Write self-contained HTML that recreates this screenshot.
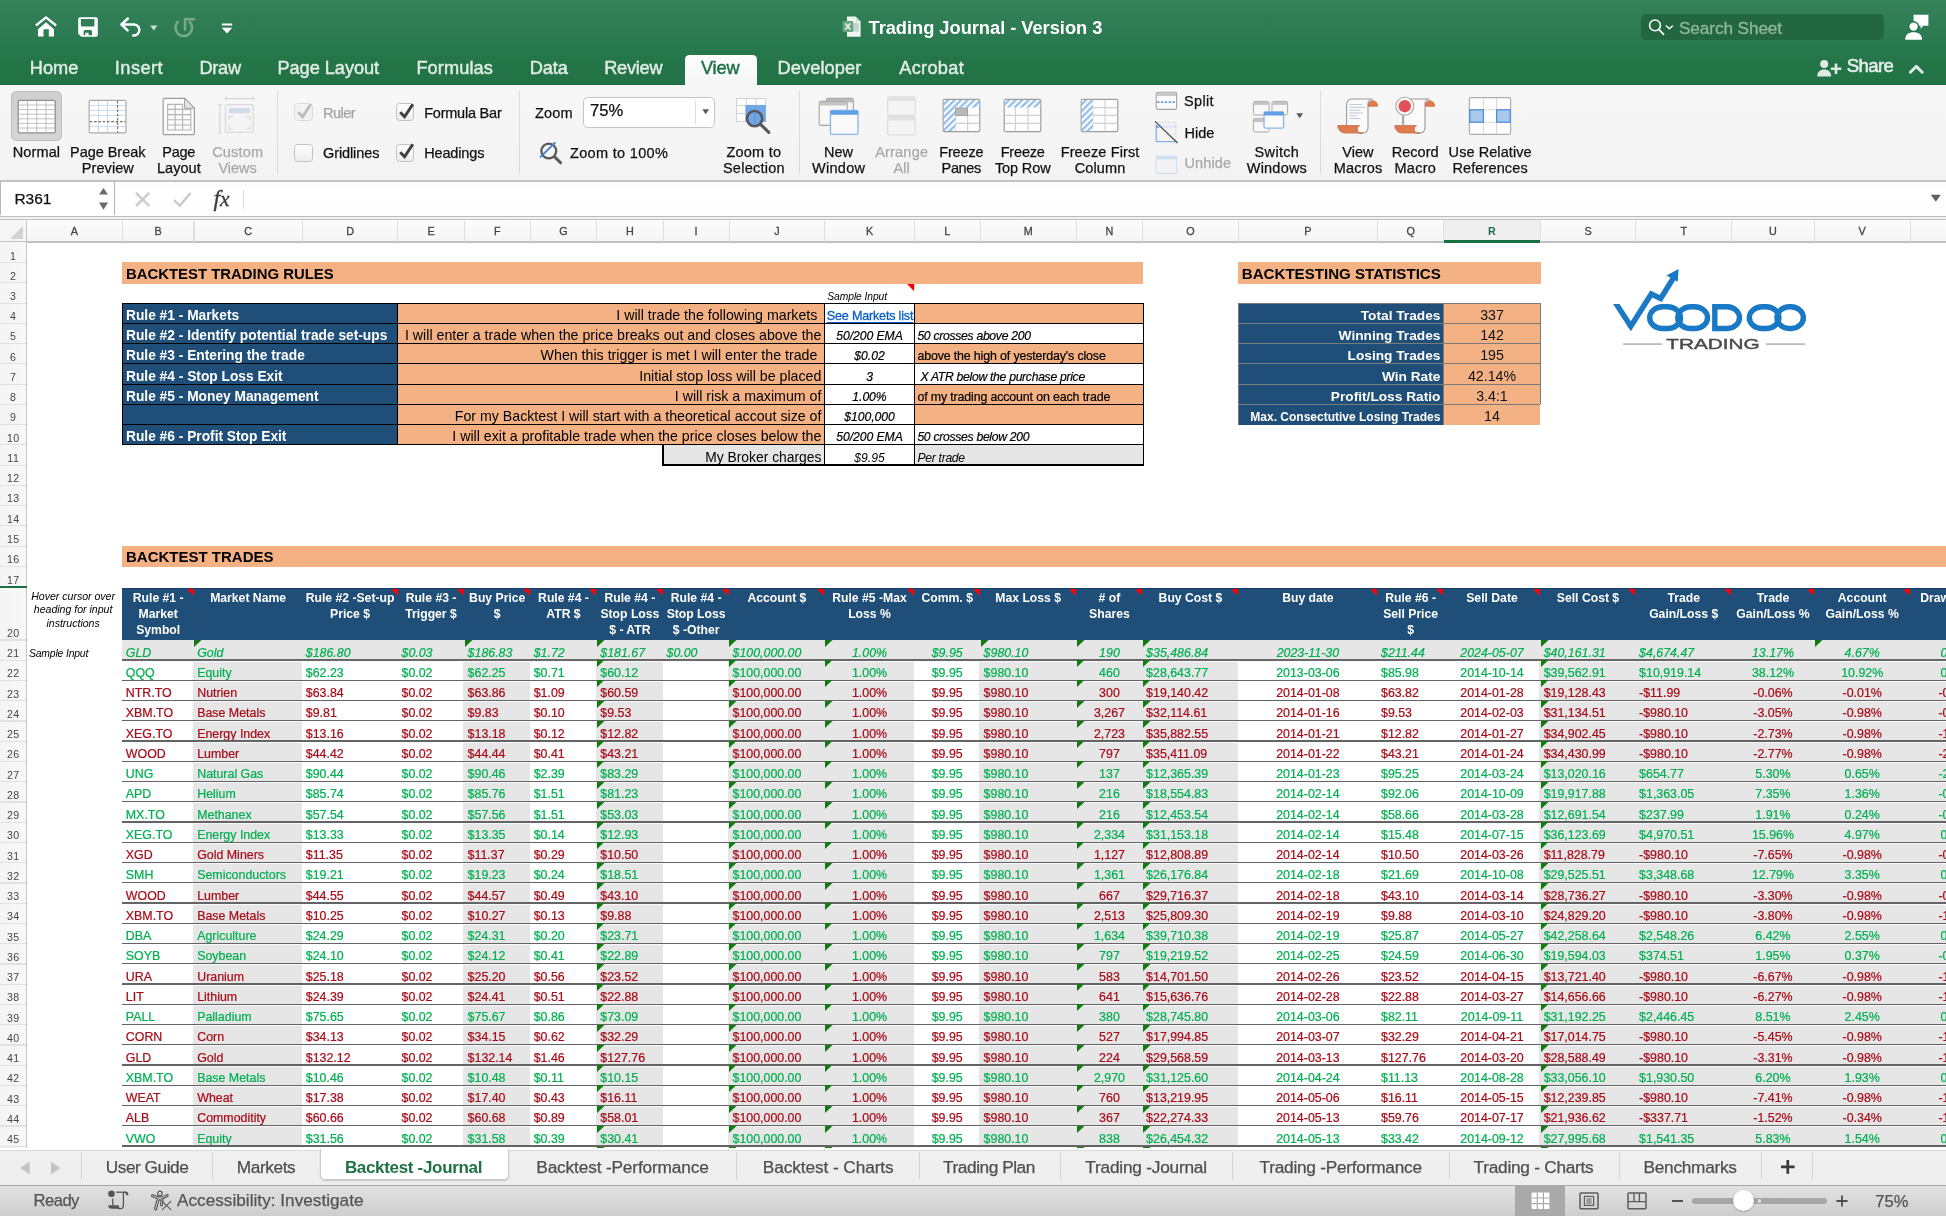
<!DOCTYPE html>
<html>
<head>
<meta charset="utf-8">
<title>Trading Journal - Version 3</title>
<style>
html,body{margin:0;padding:0;}
body{width:1946px;height:1216px;overflow:hidden;position:relative;will-change:transform;background:#fff;font-family:"Liberation Sans",sans-serif;color:#000;}
div,span,svg{position:absolute;box-sizing:border-box;}
.t{white-space:nowrap;line-height:1;}
.c{white-space:nowrap;line-height:1;-webkit-text-stroke:0.22px currentColor;}
.g{color:#00b050;}
.r{color:#a80c18;}
.i{font-style:italic;}
.hd{color:#fff;font-weight:bold;font-size:12.2px;line-height:16.2px;text-align:center;}
.rn{color:#454545;text-align:center;line-height:1;letter-spacing:0.5px;white-space:nowrap;}
.cl{color:#454545;text-align:center;line-height:1;white-space:nowrap;}
.rb{font-size:15.3px;color:#000;text-align:center;line-height:16px;white-space:nowrap;}
.rbd{color:#a6a6a6;}
.tab{font-size:18.3px;color:#e6efe9;top:58px;line-height:20px;white-space:nowrap;}
.st{font-size:17.2px;color:#4d4d4d;top:1157px;line-height:20px;white-space:nowrap;}
</style>
</head>
<body>
<!-- sheet -->
<div id="sheet" style="left:0;top:216px;width:1946px;height:932px;overflow:hidden;background:#fff;">
<div style="left:122.0px;top:46.4px;width:1021.3px;height:21.2px;background:#f4b183;"></div>
<div class="t" style="left:126.0px;top:51.0px;width:300.0px;height:17.9px;font-size:14.90px;font-weight:bold;">BACKTEST TRADING RULES</div>
<div style="left:1237.8px;top:46.4px;width:302.9px;height:21.2px;background:#f4b183;"></div>
<div class="t" style="left:1241.8px;top:50.0px;width:300.0px;height:18.1px;font-size:15.10px;font-weight:bold;">BACKTESTING STATISTICS</div>
<div style="left:122.0px;top:329.9px;width:1825.6px;height:21.2px;background:#f4b183;"></div>
<div class="t" style="left:126.0px;top:333.0px;width:300.0px;height:18.0px;font-size:15.00px;font-weight:bold;">BACKTEST TRADES</div>
<div class="t" style="left:827.3px;top:76.0px;width:80.0px;height:13.3px;font-size:10.30px;font-style:italic;letter-spacing:-0.08px;">Sample Input</div>
<svg style="left:906.6px;top:67.8px" width="8" height="8"><path d="M0 0H7.200V7.200Z" fill="#ff0000"/></svg>
<div style="left:122.4px;top:87.1px;width:275.5px;height:20.2px;background:#1f4e79;"></div>
<div style="left:397.9px;top:87.1px;width:426.9px;height:20.2px;background:#f4b183;"></div>
<div style="left:824.8px;top:87.1px;width:89.4px;height:20.2px;background:#fff;"></div>
<div style="left:914.2px;top:87.1px;width:229.1px;height:20.2px;background:#f4b183;"></div>
<div class="t" style="left:126.0px;top:93.0px;width:280.0px;height:16.8px;font-size:13.75px;color:#fff;font-weight:bold;">Rule #1 - Markets</div>
<div class="t" style="left:397.9px;top:92.0px;width:419.5px;height:17.2px;font-size:14.20px;text-align:right;">I will trade the following markets</div>
<div class="t" style="left:826.8px;top:94.0px;width:89.4px;height:15.6px;font-size:12.60px;color:#0a5fc8;text-decoration:underline;text-decoration-thickness:1.500px;text-underline-offset:1.500px;letter-spacing:-0.2px;-webkit-text-stroke:0.300px #0a5fc8;">See Markets list</div>
<div style="left:122.4px;top:107.4px;width:275.5px;height:20.2px;background:#1f4e79;"></div>
<div style="left:397.9px;top:107.4px;width:426.9px;height:20.2px;background:#f4b183;"></div>
<div style="left:824.8px;top:107.4px;width:89.4px;height:20.2px;background:#fff;"></div>
<div style="left:914.2px;top:107.4px;width:229.1px;height:20.2px;background:#fff;"></div>
<div class="t" style="left:126.0px;top:113.0px;width:280.0px;height:16.8px;font-size:13.75px;color:#fff;font-weight:bold;">Rule #2 - Identify potential trade set-ups</div>
<div class="t" style="left:397.9px;top:112.0px;width:423.5px;height:17.2px;font-size:14.20px;text-align:right;">I will enter a trade when the price breaks out and closes above the</div>
<div class="t" style="left:824.8px;top:114.0px;width:89.4px;height:15.2px;font-size:12.20px;text-align:center;font-style:italic;letter-spacing:-0.05px;-webkit-text-stroke:0.200px #000;">50/200 EMA</div>
<div class="t" style="left:917.4px;top:114.0px;width:240.0px;height:15.2px;font-size:12.20px;font-style:italic;letter-spacing:-0.3px;-webkit-text-stroke:0.200px #000;">50 crosses above 200</div>
<div style="left:122.4px;top:127.6px;width:275.5px;height:20.2px;background:#1f4e79;"></div>
<div style="left:397.9px;top:127.6px;width:426.9px;height:20.2px;background:#f4b183;"></div>
<div style="left:824.8px;top:127.6px;width:89.4px;height:20.2px;background:#fff;"></div>
<div style="left:914.2px;top:127.6px;width:229.1px;height:20.2px;background:#f4b183;"></div>
<div class="t" style="left:126.0px;top:133.0px;width:280.0px;height:16.8px;font-size:13.75px;color:#fff;font-weight:bold;">Rule #3 - Entering the trade</div>
<div class="t" style="left:397.9px;top:132.0px;width:419.5px;height:17.2px;font-size:14.20px;text-align:right;">When this trigger is met I will enter the trade</div>
<div class="t" style="left:824.8px;top:134.0px;width:89.4px;height:15.2px;font-size:12.20px;text-align:center;font-style:italic;letter-spacing:-0.05px;-webkit-text-stroke:0.200px #000;">$0.02</div>
<div class="t" style="left:917.4px;top:134.0px;width:240.0px;height:15.4px;font-size:12.40px;letter-spacing:-0.14px;-webkit-text-stroke:0.200px #000;">above the high of yesterday&#x27;s close</div>
<div style="left:122.4px;top:147.9px;width:275.5px;height:20.2px;background:#1f4e79;"></div>
<div style="left:397.9px;top:147.9px;width:426.9px;height:20.2px;background:#f4b183;"></div>
<div style="left:824.8px;top:147.9px;width:89.4px;height:20.2px;background:#fff;"></div>
<div style="left:914.2px;top:147.9px;width:229.1px;height:20.2px;background:#fff;"></div>
<div class="t" style="left:126.0px;top:154.0px;width:280.0px;height:16.8px;font-size:13.75px;color:#fff;font-weight:bold;">Rule #4 - Stop Loss Exit</div>
<div class="t" style="left:397.9px;top:153.0px;width:423.5px;height:17.2px;font-size:14.20px;text-align:right;">Initial stop loss will be placed</div>
<div class="t" style="left:824.8px;top:155.0px;width:89.4px;height:15.2px;font-size:12.20px;text-align:center;font-style:italic;letter-spacing:-0.05px;-webkit-text-stroke:0.200px #000;">3</div>
<div class="t" style="left:917.4px;top:155.0px;width:240.0px;height:15.2px;font-size:12.20px;font-style:italic;letter-spacing:-0.3px;-webkit-text-stroke:0.200px #000;">&nbsp;X ATR below the purchase price</div>
<div style="left:122.4px;top:168.1px;width:275.5px;height:20.2px;background:#1f4e79;"></div>
<div style="left:397.9px;top:168.1px;width:426.9px;height:20.2px;background:#f4b183;"></div>
<div style="left:824.8px;top:168.1px;width:89.4px;height:20.2px;background:#fff;"></div>
<div style="left:914.2px;top:168.1px;width:229.1px;height:20.2px;background:#f4b183;"></div>
<div class="t" style="left:126.0px;top:174.0px;width:280.0px;height:16.8px;font-size:13.75px;color:#fff;font-weight:bold;">Rule #5 - Money Management</div>
<div class="t" style="left:397.9px;top:173.0px;width:423.5px;height:17.2px;font-size:14.20px;text-align:right;">I will risk a maximum of</div>
<div class="t" style="left:824.8px;top:175.0px;width:89.4px;height:15.2px;font-size:12.20px;text-align:center;font-style:italic;letter-spacing:-0.05px;-webkit-text-stroke:0.200px #000;">1.00%</div>
<div class="t" style="left:917.4px;top:175.0px;width:240.0px;height:15.4px;font-size:12.40px;letter-spacing:-0.14px;-webkit-text-stroke:0.200px #000;">of my trading account on each trade</div>
<div style="left:122.4px;top:188.4px;width:275.5px;height:20.2px;background:#1f4e79;"></div>
<div style="left:397.9px;top:188.4px;width:426.9px;height:20.2px;background:#f4b183;"></div>
<div style="left:824.8px;top:188.4px;width:89.4px;height:20.2px;background:#fff;"></div>
<div style="left:914.2px;top:188.4px;width:229.1px;height:20.2px;background:#f4b183;"></div>
<div class="t" style="left:397.9px;top:193.0px;width:423.5px;height:17.2px;font-size:14.20px;text-align:right;">For my Backtest I will start with a theoretical accout size of</div>
<div class="t" style="left:824.8px;top:195.0px;width:89.4px;height:15.2px;font-size:12.20px;text-align:center;font-style:italic;letter-spacing:-0.05px;-webkit-text-stroke:0.200px #000;">$100,000</div>
<div style="left:122.4px;top:208.6px;width:275.5px;height:20.2px;background:#1f4e79;"></div>
<div style="left:397.9px;top:208.6px;width:426.9px;height:20.2px;background:#f4b183;"></div>
<div style="left:824.8px;top:208.6px;width:89.4px;height:20.2px;background:#fff;"></div>
<div style="left:914.2px;top:208.6px;width:229.1px;height:20.2px;background:#fff;"></div>
<div class="t" style="left:126.0px;top:214.0px;width:280.0px;height:16.8px;font-size:13.75px;color:#fff;font-weight:bold;">Rule #6 - Profit Stop Exit</div>
<div class="t" style="left:397.9px;top:213.0px;width:423.5px;height:17.2px;font-size:14.20px;text-align:right;">I will exit a profitable trade when the price closes below the</div>
<div class="t" style="left:824.8px;top:215.0px;width:89.4px;height:15.2px;font-size:12.20px;text-align:center;font-style:italic;letter-spacing:-0.05px;-webkit-text-stroke:0.200px #000;">50/200 EMA</div>
<div class="t" style="left:917.4px;top:215.0px;width:240.0px;height:15.2px;font-size:12.20px;font-style:italic;letter-spacing:-0.3px;-webkit-text-stroke:0.200px #000;">50 crosses below 200</div>
<div style="left:663.1px;top:228.9px;width:161.7px;height:20.2px;background:#e6e6e6;"></div>
<div style="left:824.8px;top:228.9px;width:89.4px;height:20.2px;background:#fff;"></div>
<div style="left:914.2px;top:228.9px;width:229.1px;height:20.2px;background:#e6e6e6;"></div>
<div class="t" style="left:663.1px;top:235.0px;width:158.3px;height:16.9px;font-size:13.85px;text-align:right;">My Broker charges</div>
<div class="t" style="left:824.8px;top:236.0px;width:89.4px;height:15.2px;font-size:12.20px;text-align:center;font-style:italic;letter-spacing:-0.05px;">$9.95</div>
<div class="t" style="left:917.4px;top:236.0px;width:200.0px;height:15.2px;font-size:12.20px;font-style:italic;letter-spacing:-0.3px;">Per trade</div>
<div style="left:121.6px;top:86.5px;width:1022.5px;height:1.3px;background:#000;"></div>
<div style="left:121.6px;top:106.8px;width:1022.5px;height:1.3px;background:#000;"></div>
<div style="left:121.6px;top:127.0px;width:1022.5px;height:1.3px;background:#000;"></div>
<div style="left:121.6px;top:147.2px;width:1022.5px;height:1.3px;background:#000;"></div>
<div style="left:121.6px;top:167.5px;width:1022.5px;height:1.3px;background:#000;"></div>
<div style="left:121.6px;top:187.8px;width:1022.5px;height:1.3px;background:#000;"></div>
<div style="left:121.6px;top:208.0px;width:1022.5px;height:1.3px;background:#000;"></div>
<div style="left:121.6px;top:228.2px;width:1022.5px;height:1.3px;background:#000;"></div>
<div style="left:662.3px;top:248.4px;width:481.8px;height:1.4px;background:#000;"></div>
<div style="left:121.8px;top:87.1px;width:1.3px;height:141.8px;background:#000;"></div>
<div style="left:397.2px;top:87.1px;width:1.3px;height:141.8px;background:#000;"></div>
<div style="left:824.1px;top:87.1px;width:1.3px;height:162.0px;background:#000;"></div>
<div style="left:913.6px;top:87.1px;width:1.3px;height:162.0px;background:#000;"></div>
<div style="left:1142.6px;top:87.1px;width:1.4px;height:162.0px;background:#000;"></div>
<div style="left:662.4px;top:228.9px;width:1.4px;height:20.2px;background:#000;"></div>
<div style="left:1238.2px;top:87.1px;width:205.5px;height:20.2px;background:#1f4e79;"></div>
<div style="left:1443.7px;top:87.1px;width:96.6px;height:20.2px;background:#f4b183;"></div>
<div class="t" style="left:1238.2px;top:93.0px;width:202.2px;height:16.7px;font-size:13.70px;text-align:right;color:#fff;font-weight:bold;">Total Trades</div>
<div class="t" style="left:1443.7px;top:92.0px;width:96.6px;height:17.2px;font-size:14.20px;text-align:center;color:#111;">337</div>
<div style="left:1238.2px;top:107.4px;width:205.5px;height:20.2px;background:#1f4e79;"></div>
<div style="left:1443.7px;top:107.4px;width:96.6px;height:20.2px;background:#f4b183;"></div>
<div class="t" style="left:1238.2px;top:113.0px;width:202.2px;height:16.7px;font-size:13.70px;text-align:right;color:#fff;font-weight:bold;">Winning Trades</div>
<div class="t" style="left:1443.7px;top:112.0px;width:96.6px;height:17.2px;font-size:14.20px;text-align:center;color:#111;">142</div>
<div style="left:1238.2px;top:127.6px;width:205.5px;height:20.2px;background:#1f4e79;"></div>
<div style="left:1443.7px;top:127.6px;width:96.6px;height:20.2px;background:#f4b183;"></div>
<div class="t" style="left:1238.2px;top:133.0px;width:202.2px;height:16.7px;font-size:13.70px;text-align:right;color:#fff;font-weight:bold;">Losing Trades</div>
<div class="t" style="left:1443.7px;top:132.0px;width:96.6px;height:17.2px;font-size:14.20px;text-align:center;color:#111;">195</div>
<div style="left:1238.2px;top:147.9px;width:205.5px;height:20.2px;background:#1f4e79;"></div>
<div style="left:1443.7px;top:147.9px;width:96.6px;height:20.2px;background:#f4b183;"></div>
<div class="t" style="left:1238.2px;top:154.0px;width:202.2px;height:16.7px;font-size:13.70px;text-align:right;color:#fff;font-weight:bold;">Win Rate</div>
<div class="t" style="left:1443.7px;top:153.0px;width:96.6px;height:17.2px;font-size:14.20px;text-align:center;color:#111;">42.14%</div>
<div style="left:1238.2px;top:168.1px;width:205.5px;height:20.2px;background:#1f4e79;"></div>
<div style="left:1443.7px;top:168.1px;width:96.6px;height:20.2px;background:#f4b183;"></div>
<div class="t" style="left:1238.2px;top:174.0px;width:202.2px;height:16.7px;font-size:13.70px;text-align:right;color:#fff;font-weight:bold;">Profit/Loss Ratio</div>
<div class="t" style="left:1443.7px;top:173.0px;width:96.6px;height:17.2px;font-size:14.20px;text-align:center;color:#111;">3.4:1</div>
<div style="left:1238.2px;top:188.4px;width:205.5px;height:20.2px;background:#1f4e79;"></div>
<div style="left:1443.7px;top:188.4px;width:96.6px;height:20.2px;background:#f4b183;"></div>
<div class="t" style="left:1238.2px;top:195.0px;width:202.2px;height:15.0px;font-size:12.00px;text-align:right;color:#fff;font-weight:bold;">Max. Consectutive Losing Trades</div>
<div class="t" style="left:1443.7px;top:193.0px;width:96.6px;height:17.2px;font-size:14.20px;text-align:center;color:#111;">14</div>
<div style="left:1238.2px;top:86.5px;width:302.1px;height:1.2px;background:#7a7a7a;"></div>
<div style="left:1238.2px;top:106.8px;width:302.1px;height:1.2px;background:#7a7a7a;"></div>
<div style="left:1238.2px;top:127.0px;width:302.1px;height:1.2px;background:#7a7a7a;"></div>
<div style="left:1238.2px;top:147.3px;width:302.1px;height:1.2px;background:#7a7a7a;"></div>
<div style="left:1238.2px;top:167.5px;width:302.1px;height:1.2px;background:#7a7a7a;"></div>
<div style="left:1238.2px;top:187.8px;width:302.1px;height:1.2px;background:#7a7a7a;"></div>
<div style="left:1237.6px;top:87.1px;width:1.2px;height:121.5px;background:#7a7a7a;"></div>
<div style="left:1443.1px;top:87.1px;width:1.2px;height:121.5px;background:#7a7a7a;"></div>
<div style="left:1539.7px;top:87.1px;width:1.2px;height:101.2px;background:#7a7a7a;"></div>
<svg style="left:1590px;top:39.0px" width="240" height="110" viewBox="0 0 1946 892">
<defs><clipPath id="vclip"><rect x="0" y="398" width="700" height="300"/></clipPath></defs>
<g fill="none" stroke="#1a79c4" stroke-width="44">
<path d="M190 362 L331 578" clip-path="url(#vclip)"/>
<path d="M319 560 L331 578 L497 316 L573 352 L680 180" stroke-linejoin="miter" stroke-miterlimit="6"/>
<rect x="484" y="420" width="250" height="176" rx="104" ry="88"/>
<rect x="712" y="420" width="241" height="176" rx="104" ry="88"/>
<path d="M1012 420 H1112 A100 88 0 0 1 1112 596 H1012 Z"/>
<rect x="1292" y="420" width="240" height="176" rx="104" ry="88"/>
<rect x="1516" y="420" width="214" height="176" rx="100" ry="88"/>
</g>
<path d="M718 113 L620 166 L712 217 Z" fill="#1a79c4"/>
<rect x="268" y="719" width="316" height="6" fill="#5c5c5c"/>
<rect x="1425" y="719" width="320" height="6" fill="#5c5c5c"/>
<text x="618" y="760" font-family="Liberation Sans, sans-serif" font-size="124" fill="#4a4a4c" stroke="#4a4a4c" stroke-width="3.5" textLength="758" lengthAdjust="spacingAndGlyphs">TRADING</text>
</svg>
<div style="left:25.0px;top:373.6px;width:96.2px;height:44.0px;font-size:10.6px;font-style:italic;text-align:center;line-height:13.6px;letter-spacing:-0.02px;">Hover cursor over<br>heading for input<br>instructions</div>
<div class="t" style="left:29.0px;top:433.0px;width:90.0px;height:13.4px;font-size:10.40px;font-style:italic;letter-spacing:-0.17px;">Sample Input</div>
<div style="left:122.0px;top:372.0px;width:1825.6px;height:52.2px;background:#1f4e79;"></div>
<div class="hd" style="left:112.4px;top:373.6px;width:91.6px;height:50.0px;">Rule #1 -<br>Market<br>Symbol</div>
<svg style="left:186.6px;top:372.8px" width="7" height="7"><path d="M0 0H6.800V6.800Z" fill="#ff0000"/></svg>
<div class="hd" style="left:184.0px;top:373.6px;width:128.2px;height:50.0px;">Market Name</div>
<div class="hd" style="left:292.2px;top:373.6px;width:115.7px;height:50.0px;">Rule #2 -Set-up<br>Price $</div>
<svg style="left:390.5px;top:372.8px" width="7" height="7"><path d="M0 0H6.800V6.800Z" fill="#ff0000"/></svg>
<div class="hd" style="left:387.9px;top:373.6px;width:86.3px;height:50.0px;">Rule #3 -<br>Trigger $</div>
<svg style="left:456.8px;top:372.8px" width="7" height="7"><path d="M0 0H6.800V6.800Z" fill="#ff0000"/></svg>
<div class="hd" style="left:454.2px;top:373.6px;width:86.1px;height:50.0px;">Buy Price<br>$</div>
<svg style="left:522.9px;top:372.8px" width="7" height="7"><path d="M0 0H6.800V6.800Z" fill="#ff0000"/></svg>
<div class="hd" style="left:520.3px;top:373.6px;width:86.4px;height:50.0px;">Rule #4 -<br>ATR $</div>
<svg style="left:589.3px;top:372.8px" width="7" height="7"><path d="M0 0H6.800V6.800Z" fill="#ff0000"/></svg>
<div class="hd" style="left:586.7px;top:373.6px;width:86.4px;height:50.0px;">Rule #4 -<br>Stop Loss<br>$ - ATR</div>
<svg style="left:655.7px;top:372.8px" width="7" height="7"><path d="M0 0H6.800V6.800Z" fill="#ff0000"/></svg>
<div class="hd" style="left:653.1px;top:373.6px;width:86.0px;height:50.0px;">Rule #4 -<br>Stop Loss<br>$ -Other</div>
<svg style="left:721.7px;top:372.8px" width="7" height="7"><path d="M0 0H6.800V6.800Z" fill="#ff0000"/></svg>
<div class="hd" style="left:719.1px;top:373.6px;width:115.7px;height:50.0px;">Account $</div>
<svg style="left:817.4px;top:372.8px" width="7" height="7"><path d="M0 0H6.800V6.800Z" fill="#ff0000"/></svg>
<div class="hd" style="left:814.8px;top:373.6px;width:109.4px;height:50.0px;">Rule #5 -Max<br>Loss %</div>
<svg style="left:906.8px;top:372.8px" width="7" height="7"><path d="M0 0H6.800V6.800Z" fill="#ff0000"/></svg>
<div class="hd" style="left:904.2px;top:373.6px;width:86.0px;height:50.0px;">Comm. $</div>
<svg style="left:972.8px;top:372.8px" width="7" height="7"><path d="M0 0H6.800V6.800Z" fill="#ff0000"/></svg>
<div class="hd" style="left:970.2px;top:373.6px;width:116.0px;height:50.0px;">Max Loss $</div>
<svg style="left:1068.8px;top:372.8px" width="7" height="7"><path d="M0 0H6.800V6.800Z" fill="#ff0000"/></svg>
<div class="hd" style="left:1066.2px;top:373.6px;width:86.5px;height:50.0px;"># of<br>Shares</div>
<svg style="left:1135.3px;top:372.8px" width="7" height="7"><path d="M0 0H6.800V6.800Z" fill="#ff0000"/></svg>
<div class="hd" style="left:1132.7px;top:373.6px;width:115.5px;height:50.0px;">Buy Cost $</div>
<svg style="left:1230.8px;top:372.8px" width="7" height="7"><path d="M0 0H6.800V6.800Z" fill="#ff0000"/></svg>
<div class="hd" style="left:1228.2px;top:373.6px;width:159.4px;height:50.0px;">Buy date</div>
<svg style="left:1370.2px;top:372.8px" width="7" height="7"><path d="M0 0H6.800V6.800Z" fill="#ff0000"/></svg>
<div class="hd" style="left:1367.6px;top:373.6px;width:86.1px;height:50.0px;">Rule #6 -<br>Sell Price<br>$</div>
<svg style="left:1436.3px;top:372.8px" width="7" height="7"><path d="M0 0H6.800V6.800Z" fill="#ff0000"/></svg>
<div class="hd" style="left:1433.7px;top:373.6px;width:116.6px;height:50.0px;">Sell Date</div>
<svg style="left:1532.9px;top:372.8px" width="7" height="7"><path d="M0 0H6.800V6.800Z" fill="#ff0000"/></svg>
<div class="hd" style="left:1530.3px;top:373.6px;width:115.4px;height:50.0px;">Sell Cost $</div>
<svg style="left:1628.3px;top:372.8px" width="7" height="7"><path d="M0 0H6.800V6.800Z" fill="#ff0000"/></svg>
<div class="hd" style="left:1625.7px;top:373.6px;width:116.0px;height:50.0px;">Trade<br>Gain/Loss $</div>
<svg style="left:1724.3px;top:372.8px" width="7" height="7"><path d="M0 0H6.800V6.800Z" fill="#ff0000"/></svg>
<div class="hd" style="left:1721.7px;top:373.6px;width:102.5px;height:50.0px;">Trade<br>Gain/Loss %</div>
<svg style="left:1806.8px;top:372.8px" width="7" height="7"><path d="M0 0H6.800V6.800Z" fill="#ff0000"/></svg>
<div class="hd" style="left:1804.2px;top:373.6px;width:116.0px;height:50.0px;">Account<br>Gain/Loss %</div>
<svg style="left:1902.8px;top:372.8px" width="7" height="7"><path d="M0 0H6.800V6.800Z" fill="#ff0000"/></svg>
<div class="hd" style="left:1900.2px;top:373.6px;width:115.8px;height:50.0px;">Drawdown %</div>
<div style="left:122.0px;top:424.0px;width:1825.6px;height:20.2px;background:#e6e6e6;"></div>
<div style="left:193.1px;top:444.2px;width:109.1px;height:490.0px;background:#e6e6e6;"></div>
<div style="left:463.3px;top:444.2px;width:67.0px;height:490.0px;background:#e6e6e6;"></div>
<div style="left:595.8px;top:444.2px;width:67.3px;height:490.0px;background:#e6e6e6;"></div>
<div style="left:728.2px;top:444.2px;width:186.0px;height:490.0px;background:#e6e6e6;"></div>
<div style="left:979.3px;top:444.2px;width:258.9px;height:490.0px;background:#e6e6e6;"></div>
<div style="left:1539.4px;top:444.2px;width:466.6px;height:490.0px;background:#e6e6e6;"></div>
<div class="c g i" style="left:125.8px;top:431.0px;width:71.6px;height:15.4px;font-size:12.40px;">GLD</div>
<div class="c g i" style="left:197.2px;top:431.0px;width:108.2px;height:15.4px;font-size:12.40px;">Gold</div>
<div class="c g i" style="left:305.8px;top:431.0px;width:95.7px;height:15.4px;font-size:12.40px;">$186.80</div>
<div class="c g i" style="left:401.5px;top:431.0px;width:66.3px;height:15.4px;font-size:12.40px;">$0.03</div>
<div class="c g i" style="left:467.6px;top:431.0px;width:66.1px;height:15.4px;font-size:12.40px;">$186.83</div>
<div class="c g i" style="left:533.7px;top:431.0px;width:66.4px;height:15.4px;font-size:12.40px;">$1.72</div>
<div class="c g i" style="left:600.3px;top:431.0px;width:66.4px;height:15.4px;font-size:12.40px;">$181.67</div>
<div class="c g i" style="left:666.5px;top:431.0px;width:66.0px;height:15.4px;font-size:12.40px;">$0.00</div>
<div class="c g i" style="left:732.5px;top:431.0px;width:95.7px;height:15.4px;font-size:12.40px;">$100,000.00</div>
<div class="c g i" style="left:804.8px;top:431.0px;width:129.4px;height:15.4px;font-size:12.40px;text-align:center;">1.00%</div>
<div class="c g i" style="left:894.2px;top:431.0px;width:106.0px;height:15.4px;font-size:12.40px;text-align:center;">$9.95</div>
<div class="c g i" style="left:983.6px;top:431.0px;width:96.0px;height:15.4px;font-size:12.40px;">$980.10</div>
<div class="c g i" style="left:1056.2px;top:431.0px;width:106.5px;height:15.4px;font-size:12.40px;text-align:center;">190</div>
<div class="c g i" style="left:1146.1px;top:431.0px;width:95.5px;height:15.4px;font-size:12.40px;">$35,486.84</div>
<div class="c g i" style="left:1218.2px;top:431.0px;width:179.4px;height:15.4px;font-size:12.40px;text-align:center;">2023-11-30</div>
<div class="c g i" style="left:1381.0px;top:431.0px;width:66.1px;height:15.4px;font-size:12.40px;">$211.44</div>
<div class="c g i" style="left:1423.7px;top:431.0px;width:136.6px;height:15.4px;font-size:12.40px;text-align:center;">2024-05-07</div>
<div class="c g i" style="left:1543.7px;top:431.0px;width:95.4px;height:15.4px;font-size:12.40px;">$40,161.31</div>
<div class="c g i" style="left:1639.1px;top:431.0px;width:96.0px;height:15.4px;font-size:12.40px;">$4,674.47</div>
<div class="c g i" style="left:1711.7px;top:431.0px;width:122.5px;height:15.4px;font-size:12.40px;text-align:center;">13.17%</div>
<div class="c g i" style="left:1794.2px;top:431.0px;width:136.0px;height:15.4px;font-size:12.40px;text-align:center;">4.67%</div>
<div class="c g i" style="left:1890.2px;top:431.0px;width:135.8px;height:15.4px;font-size:12.40px;text-align:center;">0.31%</div>
<div style="left:122.0px;top:443.1px;width:1825.6px;height:1.8px;background:#686868;"></div>
<div style="left:122.0px;top:444.9px;width:1825.6px;height:0.9px;background:rgba(255,255,255,0.75);"></div>
<svg style="left:194.3px;top:423.9px" width="8" height="8"><path d="M0 0H7.5L0 7Z" fill="#107c10"/></svg>
<svg style="left:464.5px;top:423.9px" width="8" height="8"><path d="M0 0H7.5L0 7Z" fill="#107c10"/></svg>
<svg style="left:597.0px;top:423.9px" width="8" height="8"><path d="M0 0H7.5L0 7Z" fill="#107c10"/></svg>
<svg style="left:729.4px;top:423.9px" width="8" height="8"><path d="M0 0H7.5L0 7Z" fill="#107c10"/></svg>
<svg style="left:825.1px;top:423.9px" width="8" height="8"><path d="M0 0H7.5L0 7Z" fill="#107c10"/></svg>
<svg style="left:980.5px;top:423.9px" width="8" height="8"><path d="M0 0H7.5L0 7Z" fill="#107c10"/></svg>
<svg style="left:1076.5px;top:423.9px" width="8" height="8"><path d="M0 0H7.5L0 7Z" fill="#107c10"/></svg>
<svg style="left:1143.0px;top:423.9px" width="8" height="8"><path d="M0 0H7.5L0 7Z" fill="#107c10"/></svg>
<svg style="left:1540.6px;top:423.9px" width="8" height="8"><path d="M0 0H7.5L0 7Z" fill="#107c10"/></svg>
<svg style="left:1814.5px;top:423.9px" width="8" height="8"><path d="M0 0H7.5L0 7Z" fill="#107c10"/></svg>
<div class="c g" style="left:125.8px;top:451.0px;width:71.6px;height:15.4px;font-size:12.40px;">QQQ</div>
<div class="c g" style="left:197.2px;top:451.0px;width:108.2px;height:15.4px;font-size:12.40px;">Equity</div>
<div class="c g" style="left:305.8px;top:451.0px;width:95.7px;height:15.4px;font-size:12.40px;">$62.23</div>
<div class="c g" style="left:401.5px;top:451.0px;width:66.3px;height:15.4px;font-size:12.40px;">$0.02</div>
<div class="c g" style="left:467.6px;top:451.0px;width:66.1px;height:15.4px;font-size:12.40px;">$62.25</div>
<div class="c g" style="left:533.7px;top:451.0px;width:66.4px;height:15.4px;font-size:12.40px;">$0.71</div>
<div class="c g" style="left:600.3px;top:451.0px;width:66.4px;height:15.4px;font-size:12.40px;">$60.12</div>
<div class="c g" style="left:732.5px;top:451.0px;width:95.7px;height:15.4px;font-size:12.40px;">$100,000.00</div>
<div class="c g" style="left:804.8px;top:451.0px;width:129.4px;height:15.4px;font-size:12.40px;text-align:center;">1.00%</div>
<div class="c g" style="left:894.2px;top:451.0px;width:106.0px;height:15.4px;font-size:12.40px;text-align:center;">$9.95</div>
<div class="c g" style="left:983.6px;top:451.0px;width:96.0px;height:15.4px;font-size:12.40px;">$980.10</div>
<div class="c g" style="left:1056.2px;top:451.0px;width:106.5px;height:15.4px;font-size:12.40px;text-align:center;">460</div>
<div class="c g" style="left:1146.1px;top:451.0px;width:95.5px;height:15.4px;font-size:12.40px;">$28,643.77</div>
<div class="c g" style="left:1218.2px;top:451.0px;width:179.4px;height:15.4px;font-size:12.40px;text-align:center;">2013-03-06</div>
<div class="c g" style="left:1381.0px;top:451.0px;width:66.1px;height:15.4px;font-size:12.40px;">$85.98</div>
<div class="c g" style="left:1423.7px;top:451.0px;width:136.6px;height:15.4px;font-size:12.40px;text-align:center;">2014-10-14</div>
<div class="c g" style="left:1543.7px;top:451.0px;width:95.4px;height:15.4px;font-size:12.40px;">$39,562.91</div>
<div class="c g" style="left:1639.1px;top:451.0px;width:96.0px;height:15.4px;font-size:12.40px;">$10,919.14</div>
<div class="c g" style="left:1711.7px;top:451.0px;width:122.5px;height:15.4px;font-size:12.40px;text-align:center;">38.12%</div>
<div class="c g" style="left:1794.2px;top:451.0px;width:136.0px;height:15.4px;font-size:12.40px;text-align:center;">10.92%</div>
<div class="c g" style="left:1890.2px;top:451.0px;width:135.8px;height:15.4px;font-size:12.40px;text-align:center;">0.00%</div>
<div style="left:122.0px;top:463.7px;width:1825.6px;height:1.2px;background:#646464;"></div>
<div style="left:122.0px;top:464.9px;width:1825.6px;height:0.9px;background:rgba(255,255,255,0.75);"></div>
<svg style="left:597.0px;top:444.1px" width="8" height="8"><path d="M0 0H7.5L0 7Z" fill="#107c10"/></svg>
<svg style="left:729.4px;top:444.1px" width="8" height="8"><path d="M0 0H7.5L0 7Z" fill="#107c10"/></svg>
<svg style="left:825.1px;top:444.1px" width="8" height="8"><path d="M0 0H7.5L0 7Z" fill="#107c10"/></svg>
<svg style="left:1076.5px;top:444.1px" width="8" height="8"><path d="M0 0H7.5L0 7Z" fill="#107c10"/></svg>
<svg style="left:1143.0px;top:444.1px" width="8" height="8"><path d="M0 0H7.5L0 7Z" fill="#107c10"/></svg>
<svg style="left:1540.6px;top:444.1px" width="8" height="8"><path d="M0 0H7.5L0 7Z" fill="#107c10"/></svg>
<div class="c r" style="left:125.8px;top:471.0px;width:71.6px;height:15.4px;font-size:12.40px;">NTR.TO</div>
<div class="c r" style="left:197.2px;top:471.0px;width:108.2px;height:15.4px;font-size:12.40px;">Nutrien</div>
<div class="c r" style="left:305.8px;top:471.0px;width:95.7px;height:15.4px;font-size:12.40px;">$63.84</div>
<div class="c r" style="left:401.5px;top:471.0px;width:66.3px;height:15.4px;font-size:12.40px;">$0.02</div>
<div class="c r" style="left:467.6px;top:471.0px;width:66.1px;height:15.4px;font-size:12.40px;">$63.86</div>
<div class="c r" style="left:533.7px;top:471.0px;width:66.4px;height:15.4px;font-size:12.40px;">$1.09</div>
<div class="c r" style="left:600.3px;top:471.0px;width:66.4px;height:15.4px;font-size:12.40px;">$60.59</div>
<div class="c r" style="left:732.5px;top:471.0px;width:95.7px;height:15.4px;font-size:12.40px;">$100,000.00</div>
<div class="c r" style="left:804.8px;top:471.0px;width:129.4px;height:15.4px;font-size:12.40px;text-align:center;">1.00%</div>
<div class="c r" style="left:894.2px;top:471.0px;width:106.0px;height:15.4px;font-size:12.40px;text-align:center;">$9.95</div>
<div class="c r" style="left:983.6px;top:471.0px;width:96.0px;height:15.4px;font-size:12.40px;">$980.10</div>
<div class="c r" style="left:1056.2px;top:471.0px;width:106.5px;height:15.4px;font-size:12.40px;text-align:center;">300</div>
<div class="c r" style="left:1146.1px;top:471.0px;width:95.5px;height:15.4px;font-size:12.40px;">$19,140.42</div>
<div class="c r" style="left:1218.2px;top:471.0px;width:179.4px;height:15.4px;font-size:12.40px;text-align:center;">2014-01-08</div>
<div class="c r" style="left:1381.0px;top:471.0px;width:66.1px;height:15.4px;font-size:12.40px;">$63.82</div>
<div class="c r" style="left:1423.7px;top:471.0px;width:136.6px;height:15.4px;font-size:12.40px;text-align:center;">2014-01-28</div>
<div class="c r" style="left:1543.7px;top:471.0px;width:95.4px;height:15.4px;font-size:12.40px;">$19,128.43</div>
<div class="c r" style="left:1639.1px;top:471.0px;width:96.0px;height:15.4px;font-size:12.40px;">-$11.99</div>
<div class="c r" style="left:1711.7px;top:471.0px;width:122.5px;height:15.4px;font-size:12.40px;text-align:center;">-0.06%</div>
<div class="c r" style="left:1794.2px;top:471.0px;width:136.0px;height:15.4px;font-size:12.40px;text-align:center;">-0.01%</div>
<div class="c r" style="left:1890.2px;top:471.0px;width:135.8px;height:15.4px;font-size:12.40px;text-align:center;">-0.01%</div>
<div style="left:122.0px;top:483.9px;width:1825.6px;height:1.2px;background:#646464;"></div>
<div style="left:122.0px;top:485.2px;width:1825.6px;height:0.9px;background:rgba(255,255,255,0.75);"></div>
<svg style="left:597.0px;top:464.4px" width="8" height="8"><path d="M0 0H7.5L0 7Z" fill="#107c10"/></svg>
<svg style="left:729.4px;top:464.4px" width="8" height="8"><path d="M0 0H7.5L0 7Z" fill="#107c10"/></svg>
<svg style="left:825.1px;top:464.4px" width="8" height="8"><path d="M0 0H7.5L0 7Z" fill="#107c10"/></svg>
<svg style="left:1076.5px;top:464.4px" width="8" height="8"><path d="M0 0H7.5L0 7Z" fill="#107c10"/></svg>
<svg style="left:1143.0px;top:464.4px" width="8" height="8"><path d="M0 0H7.5L0 7Z" fill="#107c10"/></svg>
<svg style="left:1540.6px;top:464.4px" width="8" height="8"><path d="M0 0H7.5L0 7Z" fill="#107c10"/></svg>
<div class="c r" style="left:125.8px;top:491.0px;width:71.6px;height:15.4px;font-size:12.40px;">XBM.TO</div>
<div class="c r" style="left:197.2px;top:491.0px;width:108.2px;height:15.4px;font-size:12.40px;">Base Metals</div>
<div class="c r" style="left:305.8px;top:491.0px;width:95.7px;height:15.4px;font-size:12.40px;">$9.81</div>
<div class="c r" style="left:401.5px;top:491.0px;width:66.3px;height:15.4px;font-size:12.40px;">$0.02</div>
<div class="c r" style="left:467.6px;top:491.0px;width:66.1px;height:15.4px;font-size:12.40px;">$9.83</div>
<div class="c r" style="left:533.7px;top:491.0px;width:66.4px;height:15.4px;font-size:12.40px;">$0.10</div>
<div class="c r" style="left:600.3px;top:491.0px;width:66.4px;height:15.4px;font-size:12.40px;">$9.53</div>
<div class="c r" style="left:732.5px;top:491.0px;width:95.7px;height:15.4px;font-size:12.40px;">$100,000.00</div>
<div class="c r" style="left:804.8px;top:491.0px;width:129.4px;height:15.4px;font-size:12.40px;text-align:center;">1.00%</div>
<div class="c r" style="left:894.2px;top:491.0px;width:106.0px;height:15.4px;font-size:12.40px;text-align:center;">$9.95</div>
<div class="c r" style="left:983.6px;top:491.0px;width:96.0px;height:15.4px;font-size:12.40px;">$980.10</div>
<div class="c r" style="left:1056.2px;top:491.0px;width:106.5px;height:15.4px;font-size:12.40px;text-align:center;">3,267</div>
<div class="c r" style="left:1146.1px;top:491.0px;width:95.5px;height:15.4px;font-size:12.40px;">$32,114.61</div>
<div class="c r" style="left:1218.2px;top:491.0px;width:179.4px;height:15.4px;font-size:12.40px;text-align:center;">2014-01-16</div>
<div class="c r" style="left:1381.0px;top:491.0px;width:66.1px;height:15.4px;font-size:12.40px;">$9.53</div>
<div class="c r" style="left:1423.7px;top:491.0px;width:136.6px;height:15.4px;font-size:12.40px;text-align:center;">2014-02-03</div>
<div class="c r" style="left:1543.7px;top:491.0px;width:95.4px;height:15.4px;font-size:12.40px;">$31,134.51</div>
<div class="c r" style="left:1639.1px;top:491.0px;width:96.0px;height:15.4px;font-size:12.40px;">-$980.10</div>
<div class="c r" style="left:1711.7px;top:491.0px;width:122.5px;height:15.4px;font-size:12.40px;text-align:center;">-3.05%</div>
<div class="c r" style="left:1794.2px;top:491.0px;width:136.0px;height:15.4px;font-size:12.40px;text-align:center;">-0.98%</div>
<div class="c r" style="left:1890.2px;top:491.0px;width:135.8px;height:15.4px;font-size:12.40px;text-align:center;">-0.99%</div>
<div style="left:122.0px;top:504.2px;width:1825.6px;height:1.2px;background:#646464;"></div>
<div style="left:122.0px;top:505.4px;width:1825.6px;height:0.9px;background:rgba(255,255,255,0.75);"></div>
<svg style="left:597.0px;top:484.6px" width="8" height="8"><path d="M0 0H7.5L0 7Z" fill="#107c10"/></svg>
<svg style="left:729.4px;top:484.6px" width="8" height="8"><path d="M0 0H7.5L0 7Z" fill="#107c10"/></svg>
<svg style="left:825.1px;top:484.6px" width="8" height="8"><path d="M0 0H7.5L0 7Z" fill="#107c10"/></svg>
<svg style="left:1076.5px;top:484.6px" width="8" height="8"><path d="M0 0H7.5L0 7Z" fill="#107c10"/></svg>
<svg style="left:1143.0px;top:484.6px" width="8" height="8"><path d="M0 0H7.5L0 7Z" fill="#107c10"/></svg>
<svg style="left:1540.6px;top:484.6px" width="8" height="8"><path d="M0 0H7.5L0 7Z" fill="#107c10"/></svg>
<div class="c r" style="left:125.8px;top:512.0px;width:71.6px;height:15.4px;font-size:12.40px;">XEG.TO</div>
<div class="c r" style="left:197.2px;top:512.0px;width:108.2px;height:15.4px;font-size:12.40px;">Energy Index</div>
<div class="c r" style="left:305.8px;top:512.0px;width:95.7px;height:15.4px;font-size:12.40px;">$13.16</div>
<div class="c r" style="left:401.5px;top:512.0px;width:66.3px;height:15.4px;font-size:12.40px;">$0.02</div>
<div class="c r" style="left:467.6px;top:512.0px;width:66.1px;height:15.4px;font-size:12.40px;">$13.18</div>
<div class="c r" style="left:533.7px;top:512.0px;width:66.4px;height:15.4px;font-size:12.40px;">$0.12</div>
<div class="c r" style="left:600.3px;top:512.0px;width:66.4px;height:15.4px;font-size:12.40px;">$12.82</div>
<div class="c r" style="left:732.5px;top:512.0px;width:95.7px;height:15.4px;font-size:12.40px;">$100,000.00</div>
<div class="c r" style="left:804.8px;top:512.0px;width:129.4px;height:15.4px;font-size:12.40px;text-align:center;">1.00%</div>
<div class="c r" style="left:894.2px;top:512.0px;width:106.0px;height:15.4px;font-size:12.40px;text-align:center;">$9.95</div>
<div class="c r" style="left:983.6px;top:512.0px;width:96.0px;height:15.4px;font-size:12.40px;">$980.10</div>
<div class="c r" style="left:1056.2px;top:512.0px;width:106.5px;height:15.4px;font-size:12.40px;text-align:center;">2,723</div>
<div class="c r" style="left:1146.1px;top:512.0px;width:95.5px;height:15.4px;font-size:12.40px;">$35,882.55</div>
<div class="c r" style="left:1218.2px;top:512.0px;width:179.4px;height:15.4px;font-size:12.40px;text-align:center;">2014-01-21</div>
<div class="c r" style="left:1381.0px;top:512.0px;width:66.1px;height:15.4px;font-size:12.40px;">$12.82</div>
<div class="c r" style="left:1423.7px;top:512.0px;width:136.6px;height:15.4px;font-size:12.40px;text-align:center;">2014-01-27</div>
<div class="c r" style="left:1543.7px;top:512.0px;width:95.4px;height:15.4px;font-size:12.40px;">$34,902.45</div>
<div class="c r" style="left:1639.1px;top:512.0px;width:96.0px;height:15.4px;font-size:12.40px;">-$980.10</div>
<div class="c r" style="left:1711.7px;top:512.0px;width:122.5px;height:15.4px;font-size:12.40px;text-align:center;">-2.73%</div>
<div class="c r" style="left:1794.2px;top:512.0px;width:136.0px;height:15.4px;font-size:12.40px;text-align:center;">-0.98%</div>
<div class="c r" style="left:1890.2px;top:512.0px;width:135.8px;height:15.4px;font-size:12.40px;text-align:center;">-1.97%</div>
<div style="left:122.0px;top:524.4px;width:1825.6px;height:1.2px;background:#646464;"></div>
<div style="left:122.0px;top:525.7px;width:1825.6px;height:0.9px;background:rgba(255,255,255,0.75);"></div>
<svg style="left:597.0px;top:504.9px" width="8" height="8"><path d="M0 0H7.5L0 7Z" fill="#107c10"/></svg>
<svg style="left:729.4px;top:504.9px" width="8" height="8"><path d="M0 0H7.5L0 7Z" fill="#107c10"/></svg>
<svg style="left:825.1px;top:504.9px" width="8" height="8"><path d="M0 0H7.5L0 7Z" fill="#107c10"/></svg>
<svg style="left:1076.5px;top:504.9px" width="8" height="8"><path d="M0 0H7.5L0 7Z" fill="#107c10"/></svg>
<svg style="left:1143.0px;top:504.9px" width="8" height="8"><path d="M0 0H7.5L0 7Z" fill="#107c10"/></svg>
<svg style="left:1540.6px;top:504.9px" width="8" height="8"><path d="M0 0H7.5L0 7Z" fill="#107c10"/></svg>
<div class="c r" style="left:125.8px;top:532.0px;width:71.6px;height:15.4px;font-size:12.40px;">WOOD</div>
<div class="c r" style="left:197.2px;top:532.0px;width:108.2px;height:15.4px;font-size:12.40px;">Lumber</div>
<div class="c r" style="left:305.8px;top:532.0px;width:95.7px;height:15.4px;font-size:12.40px;">$44.42</div>
<div class="c r" style="left:401.5px;top:532.0px;width:66.3px;height:15.4px;font-size:12.40px;">$0.02</div>
<div class="c r" style="left:467.6px;top:532.0px;width:66.1px;height:15.4px;font-size:12.40px;">$44.44</div>
<div class="c r" style="left:533.7px;top:532.0px;width:66.4px;height:15.4px;font-size:12.40px;">$0.41</div>
<div class="c r" style="left:600.3px;top:532.0px;width:66.4px;height:15.4px;font-size:12.40px;">$43.21</div>
<div class="c r" style="left:732.5px;top:532.0px;width:95.7px;height:15.4px;font-size:12.40px;">$100,000.00</div>
<div class="c r" style="left:804.8px;top:532.0px;width:129.4px;height:15.4px;font-size:12.40px;text-align:center;">1.00%</div>
<div class="c r" style="left:894.2px;top:532.0px;width:106.0px;height:15.4px;font-size:12.40px;text-align:center;">$9.95</div>
<div class="c r" style="left:983.6px;top:532.0px;width:96.0px;height:15.4px;font-size:12.40px;">$980.10</div>
<div class="c r" style="left:1056.2px;top:532.0px;width:106.5px;height:15.4px;font-size:12.40px;text-align:center;">797</div>
<div class="c r" style="left:1146.1px;top:532.0px;width:95.5px;height:15.4px;font-size:12.40px;">$35,411.09</div>
<div class="c r" style="left:1218.2px;top:532.0px;width:179.4px;height:15.4px;font-size:12.40px;text-align:center;">2014-01-22</div>
<div class="c r" style="left:1381.0px;top:532.0px;width:66.1px;height:15.4px;font-size:12.40px;">$43.21</div>
<div class="c r" style="left:1423.7px;top:532.0px;width:136.6px;height:15.4px;font-size:12.40px;text-align:center;">2014-01-24</div>
<div class="c r" style="left:1543.7px;top:532.0px;width:95.4px;height:15.4px;font-size:12.40px;">$34,430.99</div>
<div class="c r" style="left:1639.1px;top:532.0px;width:96.0px;height:15.4px;font-size:12.40px;">-$980.10</div>
<div class="c r" style="left:1711.7px;top:532.0px;width:122.5px;height:15.4px;font-size:12.40px;text-align:center;">-2.77%</div>
<div class="c r" style="left:1794.2px;top:532.0px;width:136.0px;height:15.4px;font-size:12.40px;text-align:center;">-0.98%</div>
<div class="c r" style="left:1890.2px;top:532.0px;width:135.8px;height:15.4px;font-size:12.40px;text-align:center;">-2.95%</div>
<div style="left:122.0px;top:544.7px;width:1825.6px;height:1.2px;background:#646464;"></div>
<div style="left:122.0px;top:545.9px;width:1825.6px;height:0.9px;background:rgba(255,255,255,0.75);"></div>
<svg style="left:597.0px;top:525.1px" width="8" height="8"><path d="M0 0H7.5L0 7Z" fill="#107c10"/></svg>
<svg style="left:729.4px;top:525.1px" width="8" height="8"><path d="M0 0H7.5L0 7Z" fill="#107c10"/></svg>
<svg style="left:825.1px;top:525.1px" width="8" height="8"><path d="M0 0H7.5L0 7Z" fill="#107c10"/></svg>
<svg style="left:1076.5px;top:525.1px" width="8" height="8"><path d="M0 0H7.5L0 7Z" fill="#107c10"/></svg>
<svg style="left:1143.0px;top:525.1px" width="8" height="8"><path d="M0 0H7.5L0 7Z" fill="#107c10"/></svg>
<svg style="left:1540.6px;top:525.1px" width="8" height="8"><path d="M0 0H7.5L0 7Z" fill="#107c10"/></svg>
<div class="c g" style="left:125.8px;top:552.0px;width:71.6px;height:15.4px;font-size:12.40px;">UNG</div>
<div class="c g" style="left:197.2px;top:552.0px;width:108.2px;height:15.4px;font-size:12.40px;">Natural Gas</div>
<div class="c g" style="left:305.8px;top:552.0px;width:95.7px;height:15.4px;font-size:12.40px;">$90.44</div>
<div class="c g" style="left:401.5px;top:552.0px;width:66.3px;height:15.4px;font-size:12.40px;">$0.02</div>
<div class="c g" style="left:467.6px;top:552.0px;width:66.1px;height:15.4px;font-size:12.40px;">$90.46</div>
<div class="c g" style="left:533.7px;top:552.0px;width:66.4px;height:15.4px;font-size:12.40px;">$2.39</div>
<div class="c g" style="left:600.3px;top:552.0px;width:66.4px;height:15.4px;font-size:12.40px;">$83.29</div>
<div class="c g" style="left:732.5px;top:552.0px;width:95.7px;height:15.4px;font-size:12.40px;">$100,000.00</div>
<div class="c g" style="left:804.8px;top:552.0px;width:129.4px;height:15.4px;font-size:12.40px;text-align:center;">1.00%</div>
<div class="c g" style="left:894.2px;top:552.0px;width:106.0px;height:15.4px;font-size:12.40px;text-align:center;">$9.95</div>
<div class="c g" style="left:983.6px;top:552.0px;width:96.0px;height:15.4px;font-size:12.40px;">$980.10</div>
<div class="c g" style="left:1056.2px;top:552.0px;width:106.5px;height:15.4px;font-size:12.40px;text-align:center;">137</div>
<div class="c g" style="left:1146.1px;top:552.0px;width:95.5px;height:15.4px;font-size:12.40px;">$12,365.39</div>
<div class="c g" style="left:1218.2px;top:552.0px;width:179.4px;height:15.4px;font-size:12.40px;text-align:center;">2014-01-23</div>
<div class="c g" style="left:1381.0px;top:552.0px;width:66.1px;height:15.4px;font-size:12.40px;">$95.25</div>
<div class="c g" style="left:1423.7px;top:552.0px;width:136.6px;height:15.4px;font-size:12.40px;text-align:center;">2014-03-24</div>
<div class="c g" style="left:1543.7px;top:552.0px;width:95.4px;height:15.4px;font-size:12.40px;">$13,020.16</div>
<div class="c g" style="left:1639.1px;top:552.0px;width:96.0px;height:15.4px;font-size:12.40px;">$654.77</div>
<div class="c g" style="left:1711.7px;top:552.0px;width:122.5px;height:15.4px;font-size:12.40px;text-align:center;">5.30%</div>
<div class="c g" style="left:1794.2px;top:552.0px;width:136.0px;height:15.4px;font-size:12.40px;text-align:center;">0.65%</div>
<div class="c g" style="left:1890.2px;top:552.0px;width:135.8px;height:15.4px;font-size:12.40px;text-align:center;">-2.30%</div>
<div style="left:122.0px;top:564.9px;width:1825.6px;height:1.2px;background:#646464;"></div>
<div style="left:122.0px;top:566.2px;width:1825.6px;height:0.9px;background:rgba(255,255,255,0.75);"></div>
<svg style="left:597.0px;top:545.4px" width="8" height="8"><path d="M0 0H7.5L0 7Z" fill="#107c10"/></svg>
<svg style="left:729.4px;top:545.4px" width="8" height="8"><path d="M0 0H7.5L0 7Z" fill="#107c10"/></svg>
<svg style="left:825.1px;top:545.4px" width="8" height="8"><path d="M0 0H7.5L0 7Z" fill="#107c10"/></svg>
<svg style="left:1076.5px;top:545.4px" width="8" height="8"><path d="M0 0H7.5L0 7Z" fill="#107c10"/></svg>
<svg style="left:1143.0px;top:545.4px" width="8" height="8"><path d="M0 0H7.5L0 7Z" fill="#107c10"/></svg>
<svg style="left:1540.6px;top:545.4px" width="8" height="8"><path d="M0 0H7.5L0 7Z" fill="#107c10"/></svg>
<div class="c g" style="left:125.8px;top:572.0px;width:71.6px;height:15.4px;font-size:12.40px;">APD</div>
<div class="c g" style="left:197.2px;top:572.0px;width:108.2px;height:15.4px;font-size:12.40px;">Helium</div>
<div class="c g" style="left:305.8px;top:572.0px;width:95.7px;height:15.4px;font-size:12.40px;">$85.74</div>
<div class="c g" style="left:401.5px;top:572.0px;width:66.3px;height:15.4px;font-size:12.40px;">$0.02</div>
<div class="c g" style="left:467.6px;top:572.0px;width:66.1px;height:15.4px;font-size:12.40px;">$85.76</div>
<div class="c g" style="left:533.7px;top:572.0px;width:66.4px;height:15.4px;font-size:12.40px;">$1.51</div>
<div class="c g" style="left:600.3px;top:572.0px;width:66.4px;height:15.4px;font-size:12.40px;">$81.23</div>
<div class="c g" style="left:732.5px;top:572.0px;width:95.7px;height:15.4px;font-size:12.40px;">$100,000.00</div>
<div class="c g" style="left:804.8px;top:572.0px;width:129.4px;height:15.4px;font-size:12.40px;text-align:center;">1.00%</div>
<div class="c g" style="left:894.2px;top:572.0px;width:106.0px;height:15.4px;font-size:12.40px;text-align:center;">$9.95</div>
<div class="c g" style="left:983.6px;top:572.0px;width:96.0px;height:15.4px;font-size:12.40px;">$980.10</div>
<div class="c g" style="left:1056.2px;top:572.0px;width:106.5px;height:15.4px;font-size:12.40px;text-align:center;">216</div>
<div class="c g" style="left:1146.1px;top:572.0px;width:95.5px;height:15.4px;font-size:12.40px;">$18,554.83</div>
<div class="c g" style="left:1218.2px;top:572.0px;width:179.4px;height:15.4px;font-size:12.40px;text-align:center;">2014-02-14</div>
<div class="c g" style="left:1381.0px;top:572.0px;width:66.1px;height:15.4px;font-size:12.40px;">$92.06</div>
<div class="c g" style="left:1423.7px;top:572.0px;width:136.6px;height:15.4px;font-size:12.40px;text-align:center;">2014-10-09</div>
<div class="c g" style="left:1543.7px;top:572.0px;width:95.4px;height:15.4px;font-size:12.40px;">$19,917.88</div>
<div class="c g" style="left:1639.1px;top:572.0px;width:96.0px;height:15.4px;font-size:12.40px;">$1,363.05</div>
<div class="c g" style="left:1711.7px;top:572.0px;width:122.5px;height:15.4px;font-size:12.40px;text-align:center;">7.35%</div>
<div class="c g" style="left:1794.2px;top:572.0px;width:136.0px;height:15.4px;font-size:12.40px;text-align:center;">1.36%</div>
<div class="c g" style="left:1890.2px;top:572.0px;width:135.8px;height:15.4px;font-size:12.40px;text-align:center;">-0.93%</div>
<div style="left:122.0px;top:585.2px;width:1825.6px;height:1.2px;background:#646464;"></div>
<div style="left:122.0px;top:586.4px;width:1825.6px;height:0.9px;background:rgba(255,255,255,0.75);"></div>
<svg style="left:597.0px;top:565.6px" width="8" height="8"><path d="M0 0H7.5L0 7Z" fill="#107c10"/></svg>
<svg style="left:729.4px;top:565.6px" width="8" height="8"><path d="M0 0H7.5L0 7Z" fill="#107c10"/></svg>
<svg style="left:825.1px;top:565.6px" width="8" height="8"><path d="M0 0H7.5L0 7Z" fill="#107c10"/></svg>
<svg style="left:1076.5px;top:565.6px" width="8" height="8"><path d="M0 0H7.5L0 7Z" fill="#107c10"/></svg>
<svg style="left:1143.0px;top:565.6px" width="8" height="8"><path d="M0 0H7.5L0 7Z" fill="#107c10"/></svg>
<svg style="left:1540.6px;top:565.6px" width="8" height="8"><path d="M0 0H7.5L0 7Z" fill="#107c10"/></svg>
<div class="c g" style="left:125.8px;top:593.0px;width:71.6px;height:15.4px;font-size:12.40px;">MX.TO</div>
<div class="c g" style="left:197.2px;top:593.0px;width:108.2px;height:15.4px;font-size:12.40px;">Methanex</div>
<div class="c g" style="left:305.8px;top:593.0px;width:95.7px;height:15.4px;font-size:12.40px;">$57.54</div>
<div class="c g" style="left:401.5px;top:593.0px;width:66.3px;height:15.4px;font-size:12.40px;">$0.02</div>
<div class="c g" style="left:467.6px;top:593.0px;width:66.1px;height:15.4px;font-size:12.40px;">$57.56</div>
<div class="c g" style="left:533.7px;top:593.0px;width:66.4px;height:15.4px;font-size:12.40px;">$1.51</div>
<div class="c g" style="left:600.3px;top:593.0px;width:66.4px;height:15.4px;font-size:12.40px;">$53.03</div>
<div class="c g" style="left:732.5px;top:593.0px;width:95.7px;height:15.4px;font-size:12.40px;">$100,000.00</div>
<div class="c g" style="left:804.8px;top:593.0px;width:129.4px;height:15.4px;font-size:12.40px;text-align:center;">1.00%</div>
<div class="c g" style="left:894.2px;top:593.0px;width:106.0px;height:15.4px;font-size:12.40px;text-align:center;">$9.95</div>
<div class="c g" style="left:983.6px;top:593.0px;width:96.0px;height:15.4px;font-size:12.40px;">$980.10</div>
<div class="c g" style="left:1056.2px;top:593.0px;width:106.5px;height:15.4px;font-size:12.40px;text-align:center;">216</div>
<div class="c g" style="left:1146.1px;top:593.0px;width:95.5px;height:15.4px;font-size:12.40px;">$12,453.54</div>
<div class="c g" style="left:1218.2px;top:593.0px;width:179.4px;height:15.4px;font-size:12.40px;text-align:center;">2014-02-14</div>
<div class="c g" style="left:1381.0px;top:593.0px;width:66.1px;height:15.4px;font-size:12.40px;">$58.66</div>
<div class="c g" style="left:1423.7px;top:593.0px;width:136.6px;height:15.4px;font-size:12.40px;text-align:center;">2014-03-28</div>
<div class="c g" style="left:1543.7px;top:593.0px;width:95.4px;height:15.4px;font-size:12.40px;">$12,691.54</div>
<div class="c g" style="left:1639.1px;top:593.0px;width:96.0px;height:15.4px;font-size:12.40px;">$237.99</div>
<div class="c g" style="left:1711.7px;top:593.0px;width:122.5px;height:15.4px;font-size:12.40px;text-align:center;">1.91%</div>
<div class="c g" style="left:1794.2px;top:593.0px;width:136.0px;height:15.4px;font-size:12.40px;text-align:center;">0.24%</div>
<div class="c g" style="left:1890.2px;top:593.0px;width:135.8px;height:15.4px;font-size:12.40px;text-align:center;">-0.70%</div>
<div style="left:122.0px;top:605.4px;width:1825.6px;height:1.2px;background:#646464;"></div>
<div style="left:122.0px;top:606.7px;width:1825.6px;height:0.9px;background:rgba(255,255,255,0.75);"></div>
<svg style="left:597.0px;top:585.9px" width="8" height="8"><path d="M0 0H7.5L0 7Z" fill="#107c10"/></svg>
<svg style="left:729.4px;top:585.9px" width="8" height="8"><path d="M0 0H7.5L0 7Z" fill="#107c10"/></svg>
<svg style="left:825.1px;top:585.9px" width="8" height="8"><path d="M0 0H7.5L0 7Z" fill="#107c10"/></svg>
<svg style="left:1076.5px;top:585.9px" width="8" height="8"><path d="M0 0H7.5L0 7Z" fill="#107c10"/></svg>
<svg style="left:1143.0px;top:585.9px" width="8" height="8"><path d="M0 0H7.5L0 7Z" fill="#107c10"/></svg>
<svg style="left:1540.6px;top:585.9px" width="8" height="8"><path d="M0 0H7.5L0 7Z" fill="#107c10"/></svg>
<div class="c g" style="left:125.8px;top:613.0px;width:71.6px;height:15.4px;font-size:12.40px;">XEG.TO</div>
<div class="c g" style="left:197.2px;top:613.0px;width:108.2px;height:15.4px;font-size:12.40px;">Energy Index</div>
<div class="c g" style="left:305.8px;top:613.0px;width:95.7px;height:15.4px;font-size:12.40px;">$13.33</div>
<div class="c g" style="left:401.5px;top:613.0px;width:66.3px;height:15.4px;font-size:12.40px;">$0.02</div>
<div class="c g" style="left:467.6px;top:613.0px;width:66.1px;height:15.4px;font-size:12.40px;">$13.35</div>
<div class="c g" style="left:533.7px;top:613.0px;width:66.4px;height:15.4px;font-size:12.40px;">$0.14</div>
<div class="c g" style="left:600.3px;top:613.0px;width:66.4px;height:15.4px;font-size:12.40px;">$12.93</div>
<div class="c g" style="left:732.5px;top:613.0px;width:95.7px;height:15.4px;font-size:12.40px;">$100,000.00</div>
<div class="c g" style="left:804.8px;top:613.0px;width:129.4px;height:15.4px;font-size:12.40px;text-align:center;">1.00%</div>
<div class="c g" style="left:894.2px;top:613.0px;width:106.0px;height:15.4px;font-size:12.40px;text-align:center;">$9.95</div>
<div class="c g" style="left:983.6px;top:613.0px;width:96.0px;height:15.4px;font-size:12.40px;">$980.10</div>
<div class="c g" style="left:1056.2px;top:613.0px;width:106.5px;height:15.4px;font-size:12.40px;text-align:center;">2,334</div>
<div class="c g" style="left:1146.1px;top:613.0px;width:95.5px;height:15.4px;font-size:12.40px;">$31,153.18</div>
<div class="c g" style="left:1218.2px;top:613.0px;width:179.4px;height:15.4px;font-size:12.40px;text-align:center;">2014-02-14</div>
<div class="c g" style="left:1381.0px;top:613.0px;width:66.1px;height:15.4px;font-size:12.40px;">$15.48</div>
<div class="c g" style="left:1423.7px;top:613.0px;width:136.6px;height:15.4px;font-size:12.40px;text-align:center;">2014-07-15</div>
<div class="c g" style="left:1543.7px;top:613.0px;width:95.4px;height:15.4px;font-size:12.40px;">$36,123.69</div>
<div class="c g" style="left:1639.1px;top:613.0px;width:96.0px;height:15.4px;font-size:12.40px;">$4,970.51</div>
<div class="c g" style="left:1711.7px;top:613.0px;width:122.5px;height:15.4px;font-size:12.40px;text-align:center;">15.96%</div>
<div class="c g" style="left:1794.2px;top:613.0px;width:136.0px;height:15.4px;font-size:12.40px;text-align:center;">4.97%</div>
<div class="c g" style="left:1890.2px;top:613.0px;width:135.8px;height:15.4px;font-size:12.40px;text-align:center;">0.00%</div>
<div style="left:122.0px;top:625.7px;width:1825.6px;height:1.2px;background:#646464;"></div>
<div style="left:122.0px;top:626.9px;width:1825.6px;height:0.9px;background:rgba(255,255,255,0.75);"></div>
<svg style="left:597.0px;top:606.1px" width="8" height="8"><path d="M0 0H7.5L0 7Z" fill="#107c10"/></svg>
<svg style="left:729.4px;top:606.1px" width="8" height="8"><path d="M0 0H7.5L0 7Z" fill="#107c10"/></svg>
<svg style="left:825.1px;top:606.1px" width="8" height="8"><path d="M0 0H7.5L0 7Z" fill="#107c10"/></svg>
<svg style="left:1076.5px;top:606.1px" width="8" height="8"><path d="M0 0H7.5L0 7Z" fill="#107c10"/></svg>
<svg style="left:1143.0px;top:606.1px" width="8" height="8"><path d="M0 0H7.5L0 7Z" fill="#107c10"/></svg>
<svg style="left:1540.6px;top:606.1px" width="8" height="8"><path d="M0 0H7.5L0 7Z" fill="#107c10"/></svg>
<div class="c r" style="left:125.8px;top:633.0px;width:71.6px;height:15.4px;font-size:12.40px;">XGD</div>
<div class="c r" style="left:197.2px;top:633.0px;width:108.2px;height:15.4px;font-size:12.40px;">Gold Miners</div>
<div class="c r" style="left:305.8px;top:633.0px;width:95.7px;height:15.4px;font-size:12.40px;">$11.35</div>
<div class="c r" style="left:401.5px;top:633.0px;width:66.3px;height:15.4px;font-size:12.40px;">$0.02</div>
<div class="c r" style="left:467.6px;top:633.0px;width:66.1px;height:15.4px;font-size:12.40px;">$11.37</div>
<div class="c r" style="left:533.7px;top:633.0px;width:66.4px;height:15.4px;font-size:12.40px;">$0.29</div>
<div class="c r" style="left:600.3px;top:633.0px;width:66.4px;height:15.4px;font-size:12.40px;">$10.50</div>
<div class="c r" style="left:732.5px;top:633.0px;width:95.7px;height:15.4px;font-size:12.40px;">$100,000.00</div>
<div class="c r" style="left:804.8px;top:633.0px;width:129.4px;height:15.4px;font-size:12.40px;text-align:center;">1.00%</div>
<div class="c r" style="left:894.2px;top:633.0px;width:106.0px;height:15.4px;font-size:12.40px;text-align:center;">$9.95</div>
<div class="c r" style="left:983.6px;top:633.0px;width:96.0px;height:15.4px;font-size:12.40px;">$980.10</div>
<div class="c r" style="left:1056.2px;top:633.0px;width:106.5px;height:15.4px;font-size:12.40px;text-align:center;">1,127</div>
<div class="c r" style="left:1146.1px;top:633.0px;width:95.5px;height:15.4px;font-size:12.40px;">$12,808.89</div>
<div class="c r" style="left:1218.2px;top:633.0px;width:179.4px;height:15.4px;font-size:12.40px;text-align:center;">2014-02-14</div>
<div class="c r" style="left:1381.0px;top:633.0px;width:66.1px;height:15.4px;font-size:12.40px;">$10.50</div>
<div class="c r" style="left:1423.7px;top:633.0px;width:136.6px;height:15.4px;font-size:12.40px;text-align:center;">2014-03-26</div>
<div class="c r" style="left:1543.7px;top:633.0px;width:95.4px;height:15.4px;font-size:12.40px;">$11,828.79</div>
<div class="c r" style="left:1639.1px;top:633.0px;width:96.0px;height:15.4px;font-size:12.40px;">-$980.10</div>
<div class="c r" style="left:1711.7px;top:633.0px;width:122.5px;height:15.4px;font-size:12.40px;text-align:center;">-7.65%</div>
<div class="c r" style="left:1794.2px;top:633.0px;width:136.0px;height:15.4px;font-size:12.40px;text-align:center;">-0.98%</div>
<div class="c r" style="left:1890.2px;top:633.0px;width:135.8px;height:15.4px;font-size:12.40px;text-align:center;">-0.98%</div>
<div style="left:122.0px;top:645.9px;width:1825.6px;height:1.2px;background:#646464;"></div>
<div style="left:122.0px;top:647.2px;width:1825.6px;height:0.9px;background:rgba(255,255,255,0.75);"></div>
<svg style="left:597.0px;top:626.4px" width="8" height="8"><path d="M0 0H7.5L0 7Z" fill="#107c10"/></svg>
<svg style="left:729.4px;top:626.4px" width="8" height="8"><path d="M0 0H7.5L0 7Z" fill="#107c10"/></svg>
<svg style="left:825.1px;top:626.4px" width="8" height="8"><path d="M0 0H7.5L0 7Z" fill="#107c10"/></svg>
<svg style="left:1076.5px;top:626.4px" width="8" height="8"><path d="M0 0H7.5L0 7Z" fill="#107c10"/></svg>
<svg style="left:1143.0px;top:626.4px" width="8" height="8"><path d="M0 0H7.5L0 7Z" fill="#107c10"/></svg>
<svg style="left:1540.6px;top:626.4px" width="8" height="8"><path d="M0 0H7.5L0 7Z" fill="#107c10"/></svg>
<div class="c g" style="left:125.8px;top:653.0px;width:71.6px;height:15.4px;font-size:12.40px;">SMH</div>
<div class="c g" style="left:197.2px;top:653.0px;width:108.2px;height:15.4px;font-size:12.40px;">Semiconductors</div>
<div class="c g" style="left:305.8px;top:653.0px;width:95.7px;height:15.4px;font-size:12.40px;">$19.21</div>
<div class="c g" style="left:401.5px;top:653.0px;width:66.3px;height:15.4px;font-size:12.40px;">$0.02</div>
<div class="c g" style="left:467.6px;top:653.0px;width:66.1px;height:15.4px;font-size:12.40px;">$19.23</div>
<div class="c g" style="left:533.7px;top:653.0px;width:66.4px;height:15.4px;font-size:12.40px;">$0.24</div>
<div class="c g" style="left:600.3px;top:653.0px;width:66.4px;height:15.4px;font-size:12.40px;">$18.51</div>
<div class="c g" style="left:732.5px;top:653.0px;width:95.7px;height:15.4px;font-size:12.40px;">$100,000.00</div>
<div class="c g" style="left:804.8px;top:653.0px;width:129.4px;height:15.4px;font-size:12.40px;text-align:center;">1.00%</div>
<div class="c g" style="left:894.2px;top:653.0px;width:106.0px;height:15.4px;font-size:12.40px;text-align:center;">$9.95</div>
<div class="c g" style="left:983.6px;top:653.0px;width:96.0px;height:15.4px;font-size:12.40px;">$980.10</div>
<div class="c g" style="left:1056.2px;top:653.0px;width:106.5px;height:15.4px;font-size:12.40px;text-align:center;">1,361</div>
<div class="c g" style="left:1146.1px;top:653.0px;width:95.5px;height:15.4px;font-size:12.40px;">$26,176.84</div>
<div class="c g" style="left:1218.2px;top:653.0px;width:179.4px;height:15.4px;font-size:12.40px;text-align:center;">2014-02-18</div>
<div class="c g" style="left:1381.0px;top:653.0px;width:66.1px;height:15.4px;font-size:12.40px;">$21.69</div>
<div class="c g" style="left:1423.7px;top:653.0px;width:136.6px;height:15.4px;font-size:12.40px;text-align:center;">2014-10-08</div>
<div class="c g" style="left:1543.7px;top:653.0px;width:95.4px;height:15.4px;font-size:12.40px;">$29,525.51</div>
<div class="c g" style="left:1639.1px;top:653.0px;width:96.0px;height:15.4px;font-size:12.40px;">$3,348.68</div>
<div class="c g" style="left:1711.7px;top:653.0px;width:122.5px;height:15.4px;font-size:12.40px;text-align:center;">12.79%</div>
<div class="c g" style="left:1794.2px;top:653.0px;width:136.0px;height:15.4px;font-size:12.40px;text-align:center;">3.35%</div>
<div class="c g" style="left:1890.2px;top:653.0px;width:135.8px;height:15.4px;font-size:12.40px;text-align:center;">0.00%</div>
<div style="left:122.0px;top:666.2px;width:1825.6px;height:1.2px;background:#646464;"></div>
<div style="left:122.0px;top:667.4px;width:1825.6px;height:0.9px;background:rgba(255,255,255,0.75);"></div>
<svg style="left:597.0px;top:646.6px" width="8" height="8"><path d="M0 0H7.5L0 7Z" fill="#107c10"/></svg>
<svg style="left:729.4px;top:646.6px" width="8" height="8"><path d="M0 0H7.5L0 7Z" fill="#107c10"/></svg>
<svg style="left:825.1px;top:646.6px" width="8" height="8"><path d="M0 0H7.5L0 7Z" fill="#107c10"/></svg>
<svg style="left:1076.5px;top:646.6px" width="8" height="8"><path d="M0 0H7.5L0 7Z" fill="#107c10"/></svg>
<svg style="left:1143.0px;top:646.6px" width="8" height="8"><path d="M0 0H7.5L0 7Z" fill="#107c10"/></svg>
<svg style="left:1540.6px;top:646.6px" width="8" height="8"><path d="M0 0H7.5L0 7Z" fill="#107c10"/></svg>
<div class="c r" style="left:125.8px;top:674.0px;width:71.6px;height:15.4px;font-size:12.40px;">WOOD</div>
<div class="c r" style="left:197.2px;top:674.0px;width:108.2px;height:15.4px;font-size:12.40px;">Lumber</div>
<div class="c r" style="left:305.8px;top:674.0px;width:95.7px;height:15.4px;font-size:12.40px;">$44.55</div>
<div class="c r" style="left:401.5px;top:674.0px;width:66.3px;height:15.4px;font-size:12.40px;">$0.02</div>
<div class="c r" style="left:467.6px;top:674.0px;width:66.1px;height:15.4px;font-size:12.40px;">$44.57</div>
<div class="c r" style="left:533.7px;top:674.0px;width:66.4px;height:15.4px;font-size:12.40px;">$0.49</div>
<div class="c r" style="left:600.3px;top:674.0px;width:66.4px;height:15.4px;font-size:12.40px;">$43.10</div>
<div class="c r" style="left:732.5px;top:674.0px;width:95.7px;height:15.4px;font-size:12.40px;">$100,000.00</div>
<div class="c r" style="left:804.8px;top:674.0px;width:129.4px;height:15.4px;font-size:12.40px;text-align:center;">1.00%</div>
<div class="c r" style="left:894.2px;top:674.0px;width:106.0px;height:15.4px;font-size:12.40px;text-align:center;">$9.95</div>
<div class="c r" style="left:983.6px;top:674.0px;width:96.0px;height:15.4px;font-size:12.40px;">$980.10</div>
<div class="c r" style="left:1056.2px;top:674.0px;width:106.5px;height:15.4px;font-size:12.40px;text-align:center;">667</div>
<div class="c r" style="left:1146.1px;top:674.0px;width:95.5px;height:15.4px;font-size:12.40px;">$29,716.37</div>
<div class="c r" style="left:1218.2px;top:674.0px;width:179.4px;height:15.4px;font-size:12.40px;text-align:center;">2014-02-18</div>
<div class="c r" style="left:1381.0px;top:674.0px;width:66.1px;height:15.4px;font-size:12.40px;">$43.10</div>
<div class="c r" style="left:1423.7px;top:674.0px;width:136.6px;height:15.4px;font-size:12.40px;text-align:center;">2014-03-14</div>
<div class="c r" style="left:1543.7px;top:674.0px;width:95.4px;height:15.4px;font-size:12.40px;">$28,736.27</div>
<div class="c r" style="left:1639.1px;top:674.0px;width:96.0px;height:15.4px;font-size:12.40px;">-$980.10</div>
<div class="c r" style="left:1711.7px;top:674.0px;width:122.5px;height:15.4px;font-size:12.40px;text-align:center;">-3.30%</div>
<div class="c r" style="left:1794.2px;top:674.0px;width:136.0px;height:15.4px;font-size:12.40px;text-align:center;">-0.98%</div>
<div class="c r" style="left:1890.2px;top:674.0px;width:135.8px;height:15.4px;font-size:12.40px;text-align:center;">-0.98%</div>
<div style="left:122.0px;top:686.4px;width:1825.6px;height:1.2px;background:#646464;"></div>
<div style="left:122.0px;top:687.7px;width:1825.6px;height:0.9px;background:rgba(255,255,255,0.75);"></div>
<svg style="left:597.0px;top:666.9px" width="8" height="8"><path d="M0 0H7.5L0 7Z" fill="#107c10"/></svg>
<svg style="left:729.4px;top:666.9px" width="8" height="8"><path d="M0 0H7.5L0 7Z" fill="#107c10"/></svg>
<svg style="left:825.1px;top:666.9px" width="8" height="8"><path d="M0 0H7.5L0 7Z" fill="#107c10"/></svg>
<svg style="left:1076.5px;top:666.9px" width="8" height="8"><path d="M0 0H7.5L0 7Z" fill="#107c10"/></svg>
<svg style="left:1143.0px;top:666.9px" width="8" height="8"><path d="M0 0H7.5L0 7Z" fill="#107c10"/></svg>
<svg style="left:1540.6px;top:666.9px" width="8" height="8"><path d="M0 0H7.5L0 7Z" fill="#107c10"/></svg>
<div class="c r" style="left:125.8px;top:694.0px;width:71.6px;height:15.4px;font-size:12.40px;">XBM.TO</div>
<div class="c r" style="left:197.2px;top:694.0px;width:108.2px;height:15.4px;font-size:12.40px;">Base Metals</div>
<div class="c r" style="left:305.8px;top:694.0px;width:95.7px;height:15.4px;font-size:12.40px;">$10.25</div>
<div class="c r" style="left:401.5px;top:694.0px;width:66.3px;height:15.4px;font-size:12.40px;">$0.02</div>
<div class="c r" style="left:467.6px;top:694.0px;width:66.1px;height:15.4px;font-size:12.40px;">$10.27</div>
<div class="c r" style="left:533.7px;top:694.0px;width:66.4px;height:15.4px;font-size:12.40px;">$0.13</div>
<div class="c r" style="left:600.3px;top:694.0px;width:66.4px;height:15.4px;font-size:12.40px;">$9.88</div>
<div class="c r" style="left:732.5px;top:694.0px;width:95.7px;height:15.4px;font-size:12.40px;">$100,000.00</div>
<div class="c r" style="left:804.8px;top:694.0px;width:129.4px;height:15.4px;font-size:12.40px;text-align:center;">1.00%</div>
<div class="c r" style="left:894.2px;top:694.0px;width:106.0px;height:15.4px;font-size:12.40px;text-align:center;">$9.95</div>
<div class="c r" style="left:983.6px;top:694.0px;width:96.0px;height:15.4px;font-size:12.40px;">$980.10</div>
<div class="c r" style="left:1056.2px;top:694.0px;width:106.5px;height:15.4px;font-size:12.40px;text-align:center;">2,513</div>
<div class="c r" style="left:1146.1px;top:694.0px;width:95.5px;height:15.4px;font-size:12.40px;">$25,809.30</div>
<div class="c r" style="left:1218.2px;top:694.0px;width:179.4px;height:15.4px;font-size:12.40px;text-align:center;">2014-02-19</div>
<div class="c r" style="left:1381.0px;top:694.0px;width:66.1px;height:15.4px;font-size:12.40px;">$9.88</div>
<div class="c r" style="left:1423.7px;top:694.0px;width:136.6px;height:15.4px;font-size:12.40px;text-align:center;">2014-03-10</div>
<div class="c r" style="left:1543.7px;top:694.0px;width:95.4px;height:15.4px;font-size:12.40px;">$24,829.20</div>
<div class="c r" style="left:1639.1px;top:694.0px;width:96.0px;height:15.4px;font-size:12.40px;">-$980.10</div>
<div class="c r" style="left:1711.7px;top:694.0px;width:122.5px;height:15.4px;font-size:12.40px;text-align:center;">-3.80%</div>
<div class="c r" style="left:1794.2px;top:694.0px;width:136.0px;height:15.4px;font-size:12.40px;text-align:center;">-0.98%</div>
<div class="c r" style="left:1890.2px;top:694.0px;width:135.8px;height:15.4px;font-size:12.40px;text-align:center;">-1.96%</div>
<div style="left:122.0px;top:706.7px;width:1825.6px;height:1.2px;background:#646464;"></div>
<div style="left:122.0px;top:707.9px;width:1825.6px;height:0.9px;background:rgba(255,255,255,0.75);"></div>
<svg style="left:597.0px;top:687.1px" width="8" height="8"><path d="M0 0H7.5L0 7Z" fill="#107c10"/></svg>
<svg style="left:729.4px;top:687.1px" width="8" height="8"><path d="M0 0H7.5L0 7Z" fill="#107c10"/></svg>
<svg style="left:825.1px;top:687.1px" width="8" height="8"><path d="M0 0H7.5L0 7Z" fill="#107c10"/></svg>
<svg style="left:1076.5px;top:687.1px" width="8" height="8"><path d="M0 0H7.5L0 7Z" fill="#107c10"/></svg>
<svg style="left:1143.0px;top:687.1px" width="8" height="8"><path d="M0 0H7.5L0 7Z" fill="#107c10"/></svg>
<svg style="left:1540.6px;top:687.1px" width="8" height="8"><path d="M0 0H7.5L0 7Z" fill="#107c10"/></svg>
<div class="c g" style="left:125.8px;top:714.0px;width:71.6px;height:15.4px;font-size:12.40px;">DBA</div>
<div class="c g" style="left:197.2px;top:714.0px;width:108.2px;height:15.4px;font-size:12.40px;">Agriculture</div>
<div class="c g" style="left:305.8px;top:714.0px;width:95.7px;height:15.4px;font-size:12.40px;">$24.29</div>
<div class="c g" style="left:401.5px;top:714.0px;width:66.3px;height:15.4px;font-size:12.40px;">$0.02</div>
<div class="c g" style="left:467.6px;top:714.0px;width:66.1px;height:15.4px;font-size:12.40px;">$24.31</div>
<div class="c g" style="left:533.7px;top:714.0px;width:66.4px;height:15.4px;font-size:12.40px;">$0.20</div>
<div class="c g" style="left:600.3px;top:714.0px;width:66.4px;height:15.4px;font-size:12.40px;">$23.71</div>
<div class="c g" style="left:732.5px;top:714.0px;width:95.7px;height:15.4px;font-size:12.40px;">$100,000.00</div>
<div class="c g" style="left:804.8px;top:714.0px;width:129.4px;height:15.4px;font-size:12.40px;text-align:center;">1.00%</div>
<div class="c g" style="left:894.2px;top:714.0px;width:106.0px;height:15.4px;font-size:12.40px;text-align:center;">$9.95</div>
<div class="c g" style="left:983.6px;top:714.0px;width:96.0px;height:15.4px;font-size:12.40px;">$980.10</div>
<div class="c g" style="left:1056.2px;top:714.0px;width:106.5px;height:15.4px;font-size:12.40px;text-align:center;">1,634</div>
<div class="c g" style="left:1146.1px;top:714.0px;width:95.5px;height:15.4px;font-size:12.40px;">$39,710.38</div>
<div class="c g" style="left:1218.2px;top:714.0px;width:179.4px;height:15.4px;font-size:12.40px;text-align:center;">2014-02-19</div>
<div class="c g" style="left:1381.0px;top:714.0px;width:66.1px;height:15.4px;font-size:12.40px;">$25.87</div>
<div class="c g" style="left:1423.7px;top:714.0px;width:136.6px;height:15.4px;font-size:12.40px;text-align:center;">2014-05-27</div>
<div class="c g" style="left:1543.7px;top:714.0px;width:95.4px;height:15.4px;font-size:12.40px;">$42,258.64</div>
<div class="c g" style="left:1639.1px;top:714.0px;width:96.0px;height:15.4px;font-size:12.40px;">$2,548.26</div>
<div class="c g" style="left:1711.7px;top:714.0px;width:122.5px;height:15.4px;font-size:12.40px;text-align:center;">6.42%</div>
<div class="c g" style="left:1794.2px;top:714.0px;width:136.0px;height:15.4px;font-size:12.40px;text-align:center;">2.55%</div>
<div class="c g" style="left:1890.2px;top:714.0px;width:135.8px;height:15.4px;font-size:12.40px;text-align:center;">0.00%</div>
<div style="left:122.0px;top:726.9px;width:1825.6px;height:1.2px;background:#646464;"></div>
<div style="left:122.0px;top:728.2px;width:1825.6px;height:0.9px;background:rgba(255,255,255,0.75);"></div>
<svg style="left:597.0px;top:707.4px" width="8" height="8"><path d="M0 0H7.5L0 7Z" fill="#107c10"/></svg>
<svg style="left:729.4px;top:707.4px" width="8" height="8"><path d="M0 0H7.5L0 7Z" fill="#107c10"/></svg>
<svg style="left:825.1px;top:707.4px" width="8" height="8"><path d="M0 0H7.5L0 7Z" fill="#107c10"/></svg>
<svg style="left:1076.5px;top:707.4px" width="8" height="8"><path d="M0 0H7.5L0 7Z" fill="#107c10"/></svg>
<svg style="left:1143.0px;top:707.4px" width="8" height="8"><path d="M0 0H7.5L0 7Z" fill="#107c10"/></svg>
<svg style="left:1540.6px;top:707.4px" width="8" height="8"><path d="M0 0H7.5L0 7Z" fill="#107c10"/></svg>
<div class="c g" style="left:125.8px;top:734.0px;width:71.6px;height:15.4px;font-size:12.40px;">SOYB</div>
<div class="c g" style="left:197.2px;top:734.0px;width:108.2px;height:15.4px;font-size:12.40px;">Soybean</div>
<div class="c g" style="left:305.8px;top:734.0px;width:95.7px;height:15.4px;font-size:12.40px;">$24.10</div>
<div class="c g" style="left:401.5px;top:734.0px;width:66.3px;height:15.4px;font-size:12.40px;">$0.02</div>
<div class="c g" style="left:467.6px;top:734.0px;width:66.1px;height:15.4px;font-size:12.40px;">$24.12</div>
<div class="c g" style="left:533.7px;top:734.0px;width:66.4px;height:15.4px;font-size:12.40px;">$0.41</div>
<div class="c g" style="left:600.3px;top:734.0px;width:66.4px;height:15.4px;font-size:12.40px;">$22.89</div>
<div class="c g" style="left:732.5px;top:734.0px;width:95.7px;height:15.4px;font-size:12.40px;">$100,000.00</div>
<div class="c g" style="left:804.8px;top:734.0px;width:129.4px;height:15.4px;font-size:12.40px;text-align:center;">1.00%</div>
<div class="c g" style="left:894.2px;top:734.0px;width:106.0px;height:15.4px;font-size:12.40px;text-align:center;">$9.95</div>
<div class="c g" style="left:983.6px;top:734.0px;width:96.0px;height:15.4px;font-size:12.40px;">$980.10</div>
<div class="c g" style="left:1056.2px;top:734.0px;width:106.5px;height:15.4px;font-size:12.40px;text-align:center;">797</div>
<div class="c g" style="left:1146.1px;top:734.0px;width:95.5px;height:15.4px;font-size:12.40px;">$19,219.52</div>
<div class="c g" style="left:1218.2px;top:734.0px;width:179.4px;height:15.4px;font-size:12.40px;text-align:center;">2014-02-25</div>
<div class="c g" style="left:1381.0px;top:734.0px;width:66.1px;height:15.4px;font-size:12.40px;">$24.59</div>
<div class="c g" style="left:1423.7px;top:734.0px;width:136.6px;height:15.4px;font-size:12.40px;text-align:center;">2014-06-30</div>
<div class="c g" style="left:1543.7px;top:734.0px;width:95.4px;height:15.4px;font-size:12.40px;">$19,594.03</div>
<div class="c g" style="left:1639.1px;top:734.0px;width:96.0px;height:15.4px;font-size:12.40px;">$374.51</div>
<div class="c g" style="left:1711.7px;top:734.0px;width:122.5px;height:15.4px;font-size:12.40px;text-align:center;">1.95%</div>
<div class="c g" style="left:1794.2px;top:734.0px;width:136.0px;height:15.4px;font-size:12.40px;text-align:center;">0.37%</div>
<div class="c g" style="left:1890.2px;top:734.0px;width:135.8px;height:15.4px;font-size:12.40px;text-align:center;">-0.00%</div>
<div style="left:122.0px;top:747.2px;width:1825.6px;height:1.2px;background:#646464;"></div>
<div style="left:122.0px;top:748.4px;width:1825.6px;height:0.9px;background:rgba(255,255,255,0.75);"></div>
<svg style="left:597.0px;top:727.6px" width="8" height="8"><path d="M0 0H7.5L0 7Z" fill="#107c10"/></svg>
<svg style="left:729.4px;top:727.6px" width="8" height="8"><path d="M0 0H7.5L0 7Z" fill="#107c10"/></svg>
<svg style="left:825.1px;top:727.6px" width="8" height="8"><path d="M0 0H7.5L0 7Z" fill="#107c10"/></svg>
<svg style="left:1076.5px;top:727.6px" width="8" height="8"><path d="M0 0H7.5L0 7Z" fill="#107c10"/></svg>
<svg style="left:1143.0px;top:727.6px" width="8" height="8"><path d="M0 0H7.5L0 7Z" fill="#107c10"/></svg>
<svg style="left:1540.6px;top:727.6px" width="8" height="8"><path d="M0 0H7.5L0 7Z" fill="#107c10"/></svg>
<div class="c r" style="left:125.8px;top:755.0px;width:71.6px;height:15.4px;font-size:12.40px;">URA</div>
<div class="c r" style="left:197.2px;top:755.0px;width:108.2px;height:15.4px;font-size:12.40px;">Uranium</div>
<div class="c r" style="left:305.8px;top:755.0px;width:95.7px;height:15.4px;font-size:12.40px;">$25.18</div>
<div class="c r" style="left:401.5px;top:755.0px;width:66.3px;height:15.4px;font-size:12.40px;">$0.02</div>
<div class="c r" style="left:467.6px;top:755.0px;width:66.1px;height:15.4px;font-size:12.40px;">$25.20</div>
<div class="c r" style="left:533.7px;top:755.0px;width:66.4px;height:15.4px;font-size:12.40px;">$0.56</div>
<div class="c r" style="left:600.3px;top:755.0px;width:66.4px;height:15.4px;font-size:12.40px;">$23.52</div>
<div class="c r" style="left:732.5px;top:755.0px;width:95.7px;height:15.4px;font-size:12.40px;">$100,000.00</div>
<div class="c r" style="left:804.8px;top:755.0px;width:129.4px;height:15.4px;font-size:12.40px;text-align:center;">1.00%</div>
<div class="c r" style="left:894.2px;top:755.0px;width:106.0px;height:15.4px;font-size:12.40px;text-align:center;">$9.95</div>
<div class="c r" style="left:983.6px;top:755.0px;width:96.0px;height:15.4px;font-size:12.40px;">$980.10</div>
<div class="c r" style="left:1056.2px;top:755.0px;width:106.5px;height:15.4px;font-size:12.40px;text-align:center;">583</div>
<div class="c r" style="left:1146.1px;top:755.0px;width:95.5px;height:15.4px;font-size:12.40px;">$14,701.50</div>
<div class="c r" style="left:1218.2px;top:755.0px;width:179.4px;height:15.4px;font-size:12.40px;text-align:center;">2014-02-26</div>
<div class="c r" style="left:1381.0px;top:755.0px;width:66.1px;height:15.4px;font-size:12.40px;">$23.52</div>
<div class="c r" style="left:1423.7px;top:755.0px;width:136.6px;height:15.4px;font-size:12.40px;text-align:center;">2014-04-15</div>
<div class="c r" style="left:1543.7px;top:755.0px;width:95.4px;height:15.4px;font-size:12.40px;">$13,721.40</div>
<div class="c r" style="left:1639.1px;top:755.0px;width:96.0px;height:15.4px;font-size:12.40px;">-$980.10</div>
<div class="c r" style="left:1711.7px;top:755.0px;width:122.5px;height:15.4px;font-size:12.40px;text-align:center;">-6.67%</div>
<div class="c r" style="left:1794.2px;top:755.0px;width:136.0px;height:15.4px;font-size:12.40px;text-align:center;">-0.98%</div>
<div class="c r" style="left:1890.2px;top:755.0px;width:135.8px;height:15.4px;font-size:12.40px;text-align:center;">-1.00%</div>
<div style="left:122.0px;top:767.4px;width:1825.6px;height:1.2px;background:#646464;"></div>
<div style="left:122.0px;top:768.7px;width:1825.6px;height:0.9px;background:rgba(255,255,255,0.75);"></div>
<svg style="left:597.0px;top:747.9px" width="8" height="8"><path d="M0 0H7.5L0 7Z" fill="#107c10"/></svg>
<svg style="left:729.4px;top:747.9px" width="8" height="8"><path d="M0 0H7.5L0 7Z" fill="#107c10"/></svg>
<svg style="left:825.1px;top:747.9px" width="8" height="8"><path d="M0 0H7.5L0 7Z" fill="#107c10"/></svg>
<svg style="left:1076.5px;top:747.9px" width="8" height="8"><path d="M0 0H7.5L0 7Z" fill="#107c10"/></svg>
<svg style="left:1143.0px;top:747.9px" width="8" height="8"><path d="M0 0H7.5L0 7Z" fill="#107c10"/></svg>
<svg style="left:1540.6px;top:747.9px" width="8" height="8"><path d="M0 0H7.5L0 7Z" fill="#107c10"/></svg>
<div class="c r" style="left:125.8px;top:775.0px;width:71.6px;height:15.4px;font-size:12.40px;">LIT</div>
<div class="c r" style="left:197.2px;top:775.0px;width:108.2px;height:15.4px;font-size:12.40px;">Lithium</div>
<div class="c r" style="left:305.8px;top:775.0px;width:95.7px;height:15.4px;font-size:12.40px;">$24.39</div>
<div class="c r" style="left:401.5px;top:775.0px;width:66.3px;height:15.4px;font-size:12.40px;">$0.02</div>
<div class="c r" style="left:467.6px;top:775.0px;width:66.1px;height:15.4px;font-size:12.40px;">$24.41</div>
<div class="c r" style="left:533.7px;top:775.0px;width:66.4px;height:15.4px;font-size:12.40px;">$0.51</div>
<div class="c r" style="left:600.3px;top:775.0px;width:66.4px;height:15.4px;font-size:12.40px;">$22.88</div>
<div class="c r" style="left:732.5px;top:775.0px;width:95.7px;height:15.4px;font-size:12.40px;">$100,000.00</div>
<div class="c r" style="left:804.8px;top:775.0px;width:129.4px;height:15.4px;font-size:12.40px;text-align:center;">1.00%</div>
<div class="c r" style="left:894.2px;top:775.0px;width:106.0px;height:15.4px;font-size:12.40px;text-align:center;">$9.95</div>
<div class="c r" style="left:983.6px;top:775.0px;width:96.0px;height:15.4px;font-size:12.40px;">$980.10</div>
<div class="c r" style="left:1056.2px;top:775.0px;width:106.5px;height:15.4px;font-size:12.40px;text-align:center;">641</div>
<div class="c r" style="left:1146.1px;top:775.0px;width:95.5px;height:15.4px;font-size:12.40px;">$15,636.76</div>
<div class="c r" style="left:1218.2px;top:775.0px;width:179.4px;height:15.4px;font-size:12.40px;text-align:center;">2014-02-28</div>
<div class="c r" style="left:1381.0px;top:775.0px;width:66.1px;height:15.4px;font-size:12.40px;">$22.88</div>
<div class="c r" style="left:1423.7px;top:775.0px;width:136.6px;height:15.4px;font-size:12.40px;text-align:center;">2014-03-27</div>
<div class="c r" style="left:1543.7px;top:775.0px;width:95.4px;height:15.4px;font-size:12.40px;">$14,656.66</div>
<div class="c r" style="left:1639.1px;top:775.0px;width:96.0px;height:15.4px;font-size:12.40px;">-$980.10</div>
<div class="c r" style="left:1711.7px;top:775.0px;width:122.5px;height:15.4px;font-size:12.40px;text-align:center;">-6.27%</div>
<div class="c r" style="left:1794.2px;top:775.0px;width:136.0px;height:15.4px;font-size:12.40px;text-align:center;">-0.98%</div>
<div class="c r" style="left:1890.2px;top:775.0px;width:135.8px;height:15.4px;font-size:12.40px;text-align:center;">-1.90%</div>
<div style="left:122.0px;top:787.7px;width:1825.6px;height:1.2px;background:#646464;"></div>
<div style="left:122.0px;top:788.9px;width:1825.6px;height:0.9px;background:rgba(255,255,255,0.75);"></div>
<svg style="left:597.0px;top:768.1px" width="8" height="8"><path d="M0 0H7.5L0 7Z" fill="#107c10"/></svg>
<svg style="left:729.4px;top:768.1px" width="8" height="8"><path d="M0 0H7.5L0 7Z" fill="#107c10"/></svg>
<svg style="left:825.1px;top:768.1px" width="8" height="8"><path d="M0 0H7.5L0 7Z" fill="#107c10"/></svg>
<svg style="left:1076.5px;top:768.1px" width="8" height="8"><path d="M0 0H7.5L0 7Z" fill="#107c10"/></svg>
<svg style="left:1143.0px;top:768.1px" width="8" height="8"><path d="M0 0H7.5L0 7Z" fill="#107c10"/></svg>
<svg style="left:1540.6px;top:768.1px" width="8" height="8"><path d="M0 0H7.5L0 7Z" fill="#107c10"/></svg>
<div class="c g" style="left:125.8px;top:795.0px;width:71.6px;height:15.4px;font-size:12.40px;">PALL</div>
<div class="c g" style="left:197.2px;top:795.0px;width:108.2px;height:15.4px;font-size:12.40px;">Palladium</div>
<div class="c g" style="left:305.8px;top:795.0px;width:95.7px;height:15.4px;font-size:12.40px;">$75.65</div>
<div class="c g" style="left:401.5px;top:795.0px;width:66.3px;height:15.4px;font-size:12.40px;">$0.02</div>
<div class="c g" style="left:467.6px;top:795.0px;width:66.1px;height:15.4px;font-size:12.40px;">$75.67</div>
<div class="c g" style="left:533.7px;top:795.0px;width:66.4px;height:15.4px;font-size:12.40px;">$0.86</div>
<div class="c g" style="left:600.3px;top:795.0px;width:66.4px;height:15.4px;font-size:12.40px;">$73.09</div>
<div class="c g" style="left:732.5px;top:795.0px;width:95.7px;height:15.4px;font-size:12.40px;">$100,000.00</div>
<div class="c g" style="left:804.8px;top:795.0px;width:129.4px;height:15.4px;font-size:12.40px;text-align:center;">1.00%</div>
<div class="c g" style="left:894.2px;top:795.0px;width:106.0px;height:15.4px;font-size:12.40px;text-align:center;">$9.95</div>
<div class="c g" style="left:983.6px;top:795.0px;width:96.0px;height:15.4px;font-size:12.40px;">$980.10</div>
<div class="c g" style="left:1056.2px;top:795.0px;width:106.5px;height:15.4px;font-size:12.40px;text-align:center;">380</div>
<div class="c g" style="left:1146.1px;top:795.0px;width:95.5px;height:15.4px;font-size:12.40px;">$28,745.80</div>
<div class="c g" style="left:1218.2px;top:795.0px;width:179.4px;height:15.4px;font-size:12.40px;text-align:center;">2014-03-06</div>
<div class="c g" style="left:1381.0px;top:795.0px;width:66.1px;height:15.4px;font-size:12.40px;">$82.11</div>
<div class="c g" style="left:1423.7px;top:795.0px;width:136.6px;height:15.4px;font-size:12.40px;text-align:center;">2014-09-11</div>
<div class="c g" style="left:1543.7px;top:795.0px;width:95.4px;height:15.4px;font-size:12.40px;">$31,192.25</div>
<div class="c g" style="left:1639.1px;top:795.0px;width:96.0px;height:15.4px;font-size:12.40px;">$2,446.45</div>
<div class="c g" style="left:1711.7px;top:795.0px;width:122.5px;height:15.4px;font-size:12.40px;text-align:center;">8.51%</div>
<div class="c g" style="left:1794.2px;top:795.0px;width:136.0px;height:15.4px;font-size:12.40px;text-align:center;">2.45%</div>
<div class="c g" style="left:1890.2px;top:795.0px;width:135.8px;height:15.4px;font-size:12.40px;text-align:center;">0.00%</div>
<div style="left:122.0px;top:807.9px;width:1825.6px;height:1.2px;background:#646464;"></div>
<div style="left:122.0px;top:809.2px;width:1825.6px;height:0.9px;background:rgba(255,255,255,0.75);"></div>
<svg style="left:597.0px;top:788.4px" width="8" height="8"><path d="M0 0H7.5L0 7Z" fill="#107c10"/></svg>
<svg style="left:729.4px;top:788.4px" width="8" height="8"><path d="M0 0H7.5L0 7Z" fill="#107c10"/></svg>
<svg style="left:825.1px;top:788.4px" width="8" height="8"><path d="M0 0H7.5L0 7Z" fill="#107c10"/></svg>
<svg style="left:1076.5px;top:788.4px" width="8" height="8"><path d="M0 0H7.5L0 7Z" fill="#107c10"/></svg>
<svg style="left:1143.0px;top:788.4px" width="8" height="8"><path d="M0 0H7.5L0 7Z" fill="#107c10"/></svg>
<svg style="left:1540.6px;top:788.4px" width="8" height="8"><path d="M0 0H7.5L0 7Z" fill="#107c10"/></svg>
<div class="c r" style="left:125.8px;top:815.0px;width:71.6px;height:15.4px;font-size:12.40px;">CORN</div>
<div class="c r" style="left:197.2px;top:815.0px;width:108.2px;height:15.4px;font-size:12.40px;">Corn</div>
<div class="c r" style="left:305.8px;top:815.0px;width:95.7px;height:15.4px;font-size:12.40px;">$34.13</div>
<div class="c r" style="left:401.5px;top:815.0px;width:66.3px;height:15.4px;font-size:12.40px;">$0.02</div>
<div class="c r" style="left:467.6px;top:815.0px;width:66.1px;height:15.4px;font-size:12.40px;">$34.15</div>
<div class="c r" style="left:533.7px;top:815.0px;width:66.4px;height:15.4px;font-size:12.40px;">$0.62</div>
<div class="c r" style="left:600.3px;top:815.0px;width:66.4px;height:15.4px;font-size:12.40px;">$32.29</div>
<div class="c r" style="left:732.5px;top:815.0px;width:95.7px;height:15.4px;font-size:12.40px;">$100,000.00</div>
<div class="c r" style="left:804.8px;top:815.0px;width:129.4px;height:15.4px;font-size:12.40px;text-align:center;">1.00%</div>
<div class="c r" style="left:894.2px;top:815.0px;width:106.0px;height:15.4px;font-size:12.40px;text-align:center;">$9.95</div>
<div class="c r" style="left:983.6px;top:815.0px;width:96.0px;height:15.4px;font-size:12.40px;">$980.10</div>
<div class="c r" style="left:1056.2px;top:815.0px;width:106.5px;height:15.4px;font-size:12.40px;text-align:center;">527</div>
<div class="c r" style="left:1146.1px;top:815.0px;width:95.5px;height:15.4px;font-size:12.40px;">$17,994.85</div>
<div class="c r" style="left:1218.2px;top:815.0px;width:179.4px;height:15.4px;font-size:12.40px;text-align:center;">2014-03-07</div>
<div class="c r" style="left:1381.0px;top:815.0px;width:66.1px;height:15.4px;font-size:12.40px;">$32.29</div>
<div class="c r" style="left:1423.7px;top:815.0px;width:136.6px;height:15.4px;font-size:12.40px;text-align:center;">2014-04-21</div>
<div class="c r" style="left:1543.7px;top:815.0px;width:95.4px;height:15.4px;font-size:12.40px;">$17,014.75</div>
<div class="c r" style="left:1639.1px;top:815.0px;width:96.0px;height:15.4px;font-size:12.40px;">-$980.10</div>
<div class="c r" style="left:1711.7px;top:815.0px;width:122.5px;height:15.4px;font-size:12.40px;text-align:center;">-5.45%</div>
<div class="c r" style="left:1794.2px;top:815.0px;width:136.0px;height:15.4px;font-size:12.40px;text-align:center;">-0.98%</div>
<div class="c r" style="left:1890.2px;top:815.0px;width:135.8px;height:15.4px;font-size:12.40px;text-align:center;">-1.00%</div>
<div style="left:122.0px;top:828.2px;width:1825.6px;height:1.2px;background:#646464;"></div>
<div style="left:122.0px;top:829.4px;width:1825.6px;height:0.9px;background:rgba(255,255,255,0.75);"></div>
<svg style="left:597.0px;top:808.7px" width="8" height="8"><path d="M0 0H7.5L0 7Z" fill="#107c10"/></svg>
<svg style="left:729.4px;top:808.7px" width="8" height="8"><path d="M0 0H7.5L0 7Z" fill="#107c10"/></svg>
<svg style="left:825.1px;top:808.7px" width="8" height="8"><path d="M0 0H7.5L0 7Z" fill="#107c10"/></svg>
<svg style="left:1076.5px;top:808.7px" width="8" height="8"><path d="M0 0H7.5L0 7Z" fill="#107c10"/></svg>
<svg style="left:1143.0px;top:808.7px" width="8" height="8"><path d="M0 0H7.5L0 7Z" fill="#107c10"/></svg>
<svg style="left:1540.6px;top:808.7px" width="8" height="8"><path d="M0 0H7.5L0 7Z" fill="#107c10"/></svg>
<div class="c r" style="left:125.8px;top:836.0px;width:71.6px;height:15.4px;font-size:12.40px;">GLD</div>
<div class="c r" style="left:197.2px;top:836.0px;width:108.2px;height:15.4px;font-size:12.40px;">Gold</div>
<div class="c r" style="left:305.8px;top:836.0px;width:95.7px;height:15.4px;font-size:12.40px;">$132.12</div>
<div class="c r" style="left:401.5px;top:836.0px;width:66.3px;height:15.4px;font-size:12.40px;">$0.02</div>
<div class="c r" style="left:467.6px;top:836.0px;width:66.1px;height:15.4px;font-size:12.40px;">$132.14</div>
<div class="c r" style="left:533.7px;top:836.0px;width:66.4px;height:15.4px;font-size:12.40px;">$1.46</div>
<div class="c r" style="left:600.3px;top:836.0px;width:66.4px;height:15.4px;font-size:12.40px;">$127.76</div>
<div class="c r" style="left:732.5px;top:836.0px;width:95.7px;height:15.4px;font-size:12.40px;">$100,000.00</div>
<div class="c r" style="left:804.8px;top:836.0px;width:129.4px;height:15.4px;font-size:12.40px;text-align:center;">1.00%</div>
<div class="c r" style="left:894.2px;top:836.0px;width:106.0px;height:15.4px;font-size:12.40px;text-align:center;">$9.95</div>
<div class="c r" style="left:983.6px;top:836.0px;width:96.0px;height:15.4px;font-size:12.40px;">$980.10</div>
<div class="c r" style="left:1056.2px;top:836.0px;width:106.5px;height:15.4px;font-size:12.40px;text-align:center;">224</div>
<div class="c r" style="left:1146.1px;top:836.0px;width:95.5px;height:15.4px;font-size:12.40px;">$29,568.59</div>
<div class="c r" style="left:1218.2px;top:836.0px;width:179.4px;height:15.4px;font-size:12.40px;text-align:center;">2014-03-13</div>
<div class="c r" style="left:1381.0px;top:836.0px;width:66.1px;height:15.4px;font-size:12.40px;">$127.76</div>
<div class="c r" style="left:1423.7px;top:836.0px;width:136.6px;height:15.4px;font-size:12.40px;text-align:center;">2014-03-20</div>
<div class="c r" style="left:1543.7px;top:836.0px;width:95.4px;height:15.4px;font-size:12.40px;">$28,588.49</div>
<div class="c r" style="left:1639.1px;top:836.0px;width:96.0px;height:15.4px;font-size:12.40px;">-$980.10</div>
<div class="c r" style="left:1711.7px;top:836.0px;width:122.5px;height:15.4px;font-size:12.40px;text-align:center;">-3.31%</div>
<div class="c r" style="left:1794.2px;top:836.0px;width:136.0px;height:15.4px;font-size:12.40px;text-align:center;">-0.98%</div>
<div class="c r" style="left:1890.2px;top:836.0px;width:135.8px;height:15.4px;font-size:12.40px;text-align:center;">-1.90%</div>
<div style="left:122.0px;top:848.4px;width:1825.6px;height:1.2px;background:#646464;"></div>
<div style="left:122.0px;top:849.7px;width:1825.6px;height:0.9px;background:rgba(255,255,255,0.75);"></div>
<svg style="left:597.0px;top:828.9px" width="8" height="8"><path d="M0 0H7.5L0 7Z" fill="#107c10"/></svg>
<svg style="left:729.4px;top:828.9px" width="8" height="8"><path d="M0 0H7.5L0 7Z" fill="#107c10"/></svg>
<svg style="left:825.1px;top:828.9px" width="8" height="8"><path d="M0 0H7.5L0 7Z" fill="#107c10"/></svg>
<svg style="left:1076.5px;top:828.9px" width="8" height="8"><path d="M0 0H7.5L0 7Z" fill="#107c10"/></svg>
<svg style="left:1143.0px;top:828.9px" width="8" height="8"><path d="M0 0H7.5L0 7Z" fill="#107c10"/></svg>
<svg style="left:1540.6px;top:828.9px" width="8" height="8"><path d="M0 0H7.5L0 7Z" fill="#107c10"/></svg>
<div class="c g" style="left:125.8px;top:856.0px;width:71.6px;height:15.4px;font-size:12.40px;">XBM.TO</div>
<div class="c g" style="left:197.2px;top:856.0px;width:108.2px;height:15.4px;font-size:12.40px;">Base Metals</div>
<div class="c g" style="left:305.8px;top:856.0px;width:95.7px;height:15.4px;font-size:12.40px;">$10.46</div>
<div class="c g" style="left:401.5px;top:856.0px;width:66.3px;height:15.4px;font-size:12.40px;">$0.02</div>
<div class="c g" style="left:467.6px;top:856.0px;width:66.1px;height:15.4px;font-size:12.40px;">$10.48</div>
<div class="c g" style="left:533.7px;top:856.0px;width:66.4px;height:15.4px;font-size:12.40px;">$0.11</div>
<div class="c g" style="left:600.3px;top:856.0px;width:66.4px;height:15.4px;font-size:12.40px;">$10.15</div>
<div class="c g" style="left:732.5px;top:856.0px;width:95.7px;height:15.4px;font-size:12.40px;">$100,000.00</div>
<div class="c g" style="left:804.8px;top:856.0px;width:129.4px;height:15.4px;font-size:12.40px;text-align:center;">1.00%</div>
<div class="c g" style="left:894.2px;top:856.0px;width:106.0px;height:15.4px;font-size:12.40px;text-align:center;">$9.95</div>
<div class="c g" style="left:983.6px;top:856.0px;width:96.0px;height:15.4px;font-size:12.40px;">$980.10</div>
<div class="c g" style="left:1056.2px;top:856.0px;width:106.5px;height:15.4px;font-size:12.40px;text-align:center;">2,970</div>
<div class="c g" style="left:1146.1px;top:856.0px;width:95.5px;height:15.4px;font-size:12.40px;">$31,125.60</div>
<div class="c g" style="left:1218.2px;top:856.0px;width:179.4px;height:15.4px;font-size:12.40px;text-align:center;">2014-04-24</div>
<div class="c g" style="left:1381.0px;top:856.0px;width:66.1px;height:15.4px;font-size:12.40px;">$11.13</div>
<div class="c g" style="left:1423.7px;top:856.0px;width:136.6px;height:15.4px;font-size:12.40px;text-align:center;">2014-08-28</div>
<div class="c g" style="left:1543.7px;top:856.0px;width:95.4px;height:15.4px;font-size:12.40px;">$33,056.10</div>
<div class="c g" style="left:1639.1px;top:856.0px;width:96.0px;height:15.4px;font-size:12.40px;">$1,930.50</div>
<div class="c g" style="left:1711.7px;top:856.0px;width:122.5px;height:15.4px;font-size:12.40px;text-align:center;">6.20%</div>
<div class="c g" style="left:1794.2px;top:856.0px;width:136.0px;height:15.4px;font-size:12.40px;text-align:center;">1.93%</div>
<div class="c g" style="left:1890.2px;top:856.0px;width:135.8px;height:15.4px;font-size:12.40px;text-align:center;">0.00%</div>
<div style="left:122.0px;top:868.7px;width:1825.6px;height:1.2px;background:#646464;"></div>
<div style="left:122.0px;top:869.9px;width:1825.6px;height:0.9px;background:rgba(255,255,255,0.75);"></div>
<svg style="left:597.0px;top:849.2px" width="8" height="8"><path d="M0 0H7.5L0 7Z" fill="#107c10"/></svg>
<svg style="left:729.4px;top:849.2px" width="8" height="8"><path d="M0 0H7.5L0 7Z" fill="#107c10"/></svg>
<svg style="left:825.1px;top:849.2px" width="8" height="8"><path d="M0 0H7.5L0 7Z" fill="#107c10"/></svg>
<svg style="left:1076.5px;top:849.2px" width="8" height="8"><path d="M0 0H7.5L0 7Z" fill="#107c10"/></svg>
<svg style="left:1143.0px;top:849.2px" width="8" height="8"><path d="M0 0H7.5L0 7Z" fill="#107c10"/></svg>
<svg style="left:1540.6px;top:849.2px" width="8" height="8"><path d="M0 0H7.5L0 7Z" fill="#107c10"/></svg>
<div class="c r" style="left:125.8px;top:876.0px;width:71.6px;height:15.4px;font-size:12.40px;">WEAT</div>
<div class="c r" style="left:197.2px;top:876.0px;width:108.2px;height:15.4px;font-size:12.40px;">Wheat</div>
<div class="c r" style="left:305.8px;top:876.0px;width:95.7px;height:15.4px;font-size:12.40px;">$17.38</div>
<div class="c r" style="left:401.5px;top:876.0px;width:66.3px;height:15.4px;font-size:12.40px;">$0.02</div>
<div class="c r" style="left:467.6px;top:876.0px;width:66.1px;height:15.4px;font-size:12.40px;">$17.40</div>
<div class="c r" style="left:533.7px;top:876.0px;width:66.4px;height:15.4px;font-size:12.40px;">$0.43</div>
<div class="c r" style="left:600.3px;top:876.0px;width:66.4px;height:15.4px;font-size:12.40px;">$16.11</div>
<div class="c r" style="left:732.5px;top:876.0px;width:95.7px;height:15.4px;font-size:12.40px;">$100,000.00</div>
<div class="c r" style="left:804.8px;top:876.0px;width:129.4px;height:15.4px;font-size:12.40px;text-align:center;">1.00%</div>
<div class="c r" style="left:894.2px;top:876.0px;width:106.0px;height:15.4px;font-size:12.40px;text-align:center;">$9.95</div>
<div class="c r" style="left:983.6px;top:876.0px;width:96.0px;height:15.4px;font-size:12.40px;">$980.10</div>
<div class="c r" style="left:1056.2px;top:876.0px;width:106.5px;height:15.4px;font-size:12.40px;text-align:center;">760</div>
<div class="c r" style="left:1146.1px;top:876.0px;width:95.5px;height:15.4px;font-size:12.40px;">$13,219.95</div>
<div class="c r" style="left:1218.2px;top:876.0px;width:179.4px;height:15.4px;font-size:12.40px;text-align:center;">2014-05-06</div>
<div class="c r" style="left:1381.0px;top:876.0px;width:66.1px;height:15.4px;font-size:12.40px;">$16.11</div>
<div class="c r" style="left:1423.7px;top:876.0px;width:136.6px;height:15.4px;font-size:12.40px;text-align:center;">2014-05-15</div>
<div class="c r" style="left:1543.7px;top:876.0px;width:95.4px;height:15.4px;font-size:12.40px;">$12,239.85</div>
<div class="c r" style="left:1639.1px;top:876.0px;width:96.0px;height:15.4px;font-size:12.40px;">-$980.10</div>
<div class="c r" style="left:1711.7px;top:876.0px;width:122.5px;height:15.4px;font-size:12.40px;text-align:center;">-7.41%</div>
<div class="c r" style="left:1794.2px;top:876.0px;width:136.0px;height:15.4px;font-size:12.40px;text-align:center;">-0.98%</div>
<div class="c r" style="left:1890.2px;top:876.0px;width:135.8px;height:15.4px;font-size:12.40px;text-align:center;">-1.00%</div>
<div style="left:122.0px;top:888.9px;width:1825.6px;height:1.2px;background:#646464;"></div>
<div style="left:122.0px;top:890.2px;width:1825.6px;height:0.9px;background:rgba(255,255,255,0.75);"></div>
<svg style="left:597.0px;top:869.4px" width="8" height="8"><path d="M0 0H7.5L0 7Z" fill="#107c10"/></svg>
<svg style="left:729.4px;top:869.4px" width="8" height="8"><path d="M0 0H7.5L0 7Z" fill="#107c10"/></svg>
<svg style="left:825.1px;top:869.4px" width="8" height="8"><path d="M0 0H7.5L0 7Z" fill="#107c10"/></svg>
<svg style="left:1076.5px;top:869.4px" width="8" height="8"><path d="M0 0H7.5L0 7Z" fill="#107c10"/></svg>
<svg style="left:1143.0px;top:869.4px" width="8" height="8"><path d="M0 0H7.5L0 7Z" fill="#107c10"/></svg>
<svg style="left:1540.6px;top:869.4px" width="8" height="8"><path d="M0 0H7.5L0 7Z" fill="#107c10"/></svg>
<div class="c r" style="left:125.8px;top:896.0px;width:71.6px;height:15.4px;font-size:12.40px;">ALB</div>
<div class="c r" style="left:197.2px;top:896.0px;width:108.2px;height:15.4px;font-size:12.40px;">Commoditity</div>
<div class="c r" style="left:305.8px;top:896.0px;width:95.7px;height:15.4px;font-size:12.40px;">$60.66</div>
<div class="c r" style="left:401.5px;top:896.0px;width:66.3px;height:15.4px;font-size:12.40px;">$0.02</div>
<div class="c r" style="left:467.6px;top:896.0px;width:66.1px;height:15.4px;font-size:12.40px;">$60.68</div>
<div class="c r" style="left:533.7px;top:896.0px;width:66.4px;height:15.4px;font-size:12.40px;">$0.89</div>
<div class="c r" style="left:600.3px;top:896.0px;width:66.4px;height:15.4px;font-size:12.40px;">$58.01</div>
<div class="c r" style="left:732.5px;top:896.0px;width:95.7px;height:15.4px;font-size:12.40px;">$100,000.00</div>
<div class="c r" style="left:804.8px;top:896.0px;width:129.4px;height:15.4px;font-size:12.40px;text-align:center;">1.00%</div>
<div class="c r" style="left:894.2px;top:896.0px;width:106.0px;height:15.4px;font-size:12.40px;text-align:center;">$9.95</div>
<div class="c r" style="left:983.6px;top:896.0px;width:96.0px;height:15.4px;font-size:12.40px;">$980.10</div>
<div class="c r" style="left:1056.2px;top:896.0px;width:106.5px;height:15.4px;font-size:12.40px;text-align:center;">367</div>
<div class="c r" style="left:1146.1px;top:896.0px;width:95.5px;height:15.4px;font-size:12.40px;">$22,274.33</div>
<div class="c r" style="left:1218.2px;top:896.0px;width:179.4px;height:15.4px;font-size:12.40px;text-align:center;">2014-05-13</div>
<div class="c r" style="left:1381.0px;top:896.0px;width:66.1px;height:15.4px;font-size:12.40px;">$59.76</div>
<div class="c r" style="left:1423.7px;top:896.0px;width:136.6px;height:15.4px;font-size:12.40px;text-align:center;">2014-07-17</div>
<div class="c r" style="left:1543.7px;top:896.0px;width:95.4px;height:15.4px;font-size:12.40px;">$21,936.62</div>
<div class="c r" style="left:1639.1px;top:896.0px;width:96.0px;height:15.4px;font-size:12.40px;">-$337.71</div>
<div class="c r" style="left:1711.7px;top:896.0px;width:122.5px;height:15.4px;font-size:12.40px;text-align:center;">-1.52%</div>
<div class="c r" style="left:1794.2px;top:896.0px;width:136.0px;height:15.4px;font-size:12.40px;text-align:center;">-0.34%</div>
<div class="c r" style="left:1890.2px;top:896.0px;width:135.8px;height:15.4px;font-size:12.40px;text-align:center;">-1.30%</div>
<div style="left:122.0px;top:909.2px;width:1825.6px;height:1.2px;background:#646464;"></div>
<div style="left:122.0px;top:910.4px;width:1825.6px;height:0.9px;background:rgba(255,255,255,0.75);"></div>
<svg style="left:597.0px;top:889.7px" width="8" height="8"><path d="M0 0H7.5L0 7Z" fill="#107c10"/></svg>
<svg style="left:729.4px;top:889.7px" width="8" height="8"><path d="M0 0H7.5L0 7Z" fill="#107c10"/></svg>
<svg style="left:825.1px;top:889.7px" width="8" height="8"><path d="M0 0H7.5L0 7Z" fill="#107c10"/></svg>
<svg style="left:1076.5px;top:889.7px" width="8" height="8"><path d="M0 0H7.5L0 7Z" fill="#107c10"/></svg>
<svg style="left:1143.0px;top:889.7px" width="8" height="8"><path d="M0 0H7.5L0 7Z" fill="#107c10"/></svg>
<svg style="left:1540.6px;top:889.7px" width="8" height="8"><path d="M0 0H7.5L0 7Z" fill="#107c10"/></svg>
<div class="c g" style="left:125.8px;top:917.0px;width:71.6px;height:15.4px;font-size:12.40px;">VWO</div>
<div class="c g" style="left:197.2px;top:917.0px;width:108.2px;height:15.4px;font-size:12.40px;">Equity</div>
<div class="c g" style="left:305.8px;top:917.0px;width:95.7px;height:15.4px;font-size:12.40px;">$31.56</div>
<div class="c g" style="left:401.5px;top:917.0px;width:66.3px;height:15.4px;font-size:12.40px;">$0.02</div>
<div class="c g" style="left:467.6px;top:917.0px;width:66.1px;height:15.4px;font-size:12.40px;">$31.58</div>
<div class="c g" style="left:533.7px;top:917.0px;width:66.4px;height:15.4px;font-size:12.40px;">$0.39</div>
<div class="c g" style="left:600.3px;top:917.0px;width:66.4px;height:15.4px;font-size:12.40px;">$30.41</div>
<div class="c g" style="left:732.5px;top:917.0px;width:95.7px;height:15.4px;font-size:12.40px;">$100,000.00</div>
<div class="c g" style="left:804.8px;top:917.0px;width:129.4px;height:15.4px;font-size:12.40px;text-align:center;">1.00%</div>
<div class="c g" style="left:894.2px;top:917.0px;width:106.0px;height:15.4px;font-size:12.40px;text-align:center;">$9.95</div>
<div class="c g" style="left:983.6px;top:917.0px;width:96.0px;height:15.4px;font-size:12.40px;">$980.10</div>
<div class="c g" style="left:1056.2px;top:917.0px;width:106.5px;height:15.4px;font-size:12.40px;text-align:center;">838</div>
<div class="c g" style="left:1146.1px;top:917.0px;width:95.5px;height:15.4px;font-size:12.40px;">$26,454.32</div>
<div class="c g" style="left:1218.2px;top:917.0px;width:179.4px;height:15.4px;font-size:12.40px;text-align:center;">2014-05-13</div>
<div class="c g" style="left:1381.0px;top:917.0px;width:66.1px;height:15.4px;font-size:12.40px;">$33.42</div>
<div class="c g" style="left:1423.7px;top:917.0px;width:136.6px;height:15.4px;font-size:12.40px;text-align:center;">2014-09-12</div>
<div class="c g" style="left:1543.7px;top:917.0px;width:95.4px;height:15.4px;font-size:12.40px;">$27,995.68</div>
<div class="c g" style="left:1639.1px;top:917.0px;width:96.0px;height:15.4px;font-size:12.40px;">$1,541.35</div>
<div class="c g" style="left:1711.7px;top:917.0px;width:122.5px;height:15.4px;font-size:12.40px;text-align:center;">5.83%</div>
<div class="c g" style="left:1794.2px;top:917.0px;width:136.0px;height:15.4px;font-size:12.40px;text-align:center;">1.54%</div>
<div class="c g" style="left:1890.2px;top:917.0px;width:135.8px;height:15.4px;font-size:12.40px;text-align:center;">0.00%</div>
<div style="left:122.0px;top:929.4px;width:1825.6px;height:1.2px;background:#646464;"></div>
<div style="left:122.0px;top:930.7px;width:1825.6px;height:0.9px;background:rgba(255,255,255,0.75);"></div>
<svg style="left:597.0px;top:909.9px" width="8" height="8"><path d="M0 0H7.5L0 7Z" fill="#107c10"/></svg>
<svg style="left:729.4px;top:909.9px" width="8" height="8"><path d="M0 0H7.5L0 7Z" fill="#107c10"/></svg>
<svg style="left:825.1px;top:909.9px" width="8" height="8"><path d="M0 0H7.5L0 7Z" fill="#107c10"/></svg>
<svg style="left:1076.5px;top:909.9px" width="8" height="8"><path d="M0 0H7.5L0 7Z" fill="#107c10"/></svg>
<svg style="left:1143.0px;top:909.9px" width="8" height="8"><path d="M0 0H7.5L0 7Z" fill="#107c10"/></svg>
<svg style="left:1540.6px;top:909.9px" width="8" height="8"><path d="M0 0H7.5L0 7Z" fill="#107c10"/></svg>
<svg style="left:597.0px;top:930.7px" width="8" height="8"><path d="M0 0H7.5L0 7Z" fill="#107c10"/></svg>
<svg style="left:729.4px;top:930.7px" width="8" height="8"><path d="M0 0H7.5L0 7Z" fill="#107c10"/></svg>
<svg style="left:825.1px;top:930.7px" width="8" height="8"><path d="M0 0H7.5L0 7Z" fill="#107c10"/></svg>
<svg style="left:1076.5px;top:930.7px" width="8" height="8"><path d="M0 0H7.5L0 7Z" fill="#107c10"/></svg>
<svg style="left:1143.0px;top:930.7px" width="8" height="8"><path d="M0 0H7.5L0 7Z" fill="#107c10"/></svg>
<svg style="left:1540.6px;top:930.7px" width="8" height="8"><path d="M0 0H7.5L0 7Z" fill="#107c10"/></svg>
<div style="left:122.0px;top:371.8px;width:1946.0px;height:0.9px;background:#1a3f63;"></div>
<div style="left:0.0px;top:0.0px;width:1946.0px;height:26.6px;background:linear-gradient(#bcbcbc 0,#bcbcbc 1.1px,#f2f2f2 1.1px,#f2f2f2 2.7px,#c2c2c2 2.7px,#c2c2c2 3.9px,#fcfcfc 3.9px,#f4f4f4 100%);"></div>
<div style="left:1443.7px;top:4.0px;width:96.6px;height:21.8px;background:#efefef;"></div>
<div style="left:0.0px;top:25.4px;width:1946.0px;height:1.2px;background:#c0c0c0;"></div>
<div style="left:1443.7px;top:24.3px;width:96.6px;height:2.6px;background:#17703f;"></div>
<div class="cl" style="left:26.2px;top:10.0px;width:96.2px;height:13.8px;font-size:10.80px;-webkit-text-stroke:0.300px #454545;">A</div>
<div style="left:121.8px;top:5.0px;width:1.2px;height:20.5px;background:#dedede;"></div>
<div class="cl" style="left:122.4px;top:10.0px;width:71.6px;height:13.8px;font-size:10.80px;-webkit-text-stroke:0.300px #454545;">B</div>
<div style="left:193.4px;top:5.0px;width:1.2px;height:20.5px;background:#dedede;"></div>
<div class="cl" style="left:194.0px;top:10.0px;width:108.2px;height:13.8px;font-size:10.80px;-webkit-text-stroke:0.300px #454545;">C</div>
<div style="left:301.6px;top:5.0px;width:1.2px;height:20.5px;background:#dedede;"></div>
<div class="cl" style="left:302.2px;top:10.0px;width:95.7px;height:13.8px;font-size:10.80px;-webkit-text-stroke:0.300px #454545;">D</div>
<div style="left:397.3px;top:5.0px;width:1.2px;height:20.5px;background:#dedede;"></div>
<div class="cl" style="left:397.9px;top:10.0px;width:66.3px;height:13.8px;font-size:10.80px;-webkit-text-stroke:0.300px #454545;">E</div>
<div style="left:463.6px;top:5.0px;width:1.2px;height:20.5px;background:#dedede;"></div>
<div class="cl" style="left:464.2px;top:10.0px;width:66.1px;height:13.8px;font-size:10.80px;-webkit-text-stroke:0.300px #454545;">F</div>
<div style="left:529.7px;top:5.0px;width:1.2px;height:20.5px;background:#dedede;"></div>
<div class="cl" style="left:530.3px;top:10.0px;width:66.4px;height:13.8px;font-size:10.80px;-webkit-text-stroke:0.300px #454545;">G</div>
<div style="left:596.1px;top:5.0px;width:1.2px;height:20.5px;background:#dedede;"></div>
<div class="cl" style="left:596.7px;top:10.0px;width:66.4px;height:13.8px;font-size:10.80px;-webkit-text-stroke:0.300px #454545;">H</div>
<div style="left:662.5px;top:5.0px;width:1.2px;height:20.5px;background:#dedede;"></div>
<div class="cl" style="left:663.1px;top:10.0px;width:66.0px;height:13.8px;font-size:10.80px;-webkit-text-stroke:0.300px #454545;">I</div>
<div style="left:728.5px;top:5.0px;width:1.2px;height:20.5px;background:#dedede;"></div>
<div class="cl" style="left:729.1px;top:10.0px;width:95.7px;height:13.8px;font-size:10.80px;-webkit-text-stroke:0.300px #454545;">J</div>
<div style="left:824.2px;top:5.0px;width:1.2px;height:20.5px;background:#dedede;"></div>
<div class="cl" style="left:824.8px;top:10.0px;width:89.4px;height:13.8px;font-size:10.80px;-webkit-text-stroke:0.300px #454545;">K</div>
<div style="left:913.6px;top:5.0px;width:1.2px;height:20.5px;background:#dedede;"></div>
<div class="cl" style="left:914.2px;top:10.0px;width:66.0px;height:13.8px;font-size:10.80px;-webkit-text-stroke:0.300px #454545;">L</div>
<div style="left:979.6px;top:5.0px;width:1.2px;height:20.5px;background:#dedede;"></div>
<div class="cl" style="left:980.2px;top:10.0px;width:96.0px;height:13.8px;font-size:10.80px;-webkit-text-stroke:0.300px #454545;">M</div>
<div style="left:1075.6px;top:5.0px;width:1.2px;height:20.5px;background:#dedede;"></div>
<div class="cl" style="left:1076.2px;top:10.0px;width:66.5px;height:13.8px;font-size:10.80px;-webkit-text-stroke:0.300px #454545;">N</div>
<div style="left:1142.1px;top:5.0px;width:1.2px;height:20.5px;background:#dedede;"></div>
<div class="cl" style="left:1142.7px;top:10.0px;width:95.5px;height:13.8px;font-size:10.80px;-webkit-text-stroke:0.300px #454545;">O</div>
<div style="left:1237.6px;top:5.0px;width:1.2px;height:20.5px;background:#dedede;"></div>
<div class="cl" style="left:1238.2px;top:10.0px;width:139.4px;height:13.8px;font-size:10.80px;-webkit-text-stroke:0.300px #454545;">P</div>
<div style="left:1377.0px;top:5.0px;width:1.2px;height:20.5px;background:#dedede;"></div>
<div class="cl" style="left:1377.6px;top:10.0px;width:66.1px;height:13.8px;font-size:10.80px;-webkit-text-stroke:0.300px #454545;">Q</div>
<div style="left:1443.1px;top:5.0px;width:1.2px;height:20.5px;background:#dedede;"></div>
<div class="cl" style="left:1443.7px;top:10.0px;width:96.6px;height:13.8px;font-size:10.80px;color:#1e7145;font-weight:bold;">R</div>
<div style="left:1539.7px;top:5.0px;width:1.2px;height:20.5px;background:#dedede;"></div>
<div class="cl" style="left:1540.3px;top:10.0px;width:95.4px;height:13.8px;font-size:10.80px;-webkit-text-stroke:0.300px #454545;">S</div>
<div style="left:1635.1px;top:5.0px;width:1.2px;height:20.5px;background:#dedede;"></div>
<div class="cl" style="left:1635.7px;top:10.0px;width:96.0px;height:13.8px;font-size:10.80px;-webkit-text-stroke:0.300px #454545;">T</div>
<div style="left:1731.1px;top:5.0px;width:1.2px;height:20.5px;background:#dedede;"></div>
<div class="cl" style="left:1731.7px;top:10.0px;width:82.5px;height:13.8px;font-size:10.80px;-webkit-text-stroke:0.300px #454545;">U</div>
<div style="left:1813.6px;top:5.0px;width:1.2px;height:20.5px;background:#dedede;"></div>
<div class="cl" style="left:1814.2px;top:10.0px;width:96.0px;height:13.8px;font-size:10.80px;-webkit-text-stroke:0.300px #454545;">V</div>
<div style="left:1909.6px;top:5.0px;width:1.2px;height:20.5px;background:#dedede;"></div>
<div style="left:0.0px;top:4.0px;width:26.2px;height:21.4px;background:#f6f6f6;"></div>
<svg style="left:9px;top:8.6px" width="15" height="15"><path d="M14 1V14H1Z" fill="#d2d2d2"/></svg>
<div style="left:0.0px;top:26.4px;width:26.2px;height:910.0px;background:linear-gradient(90deg,#f4f4f4,#f8f8f8);"></div>
<div style="left:25.6px;top:3.4px;width:1.4px;height:932.0px;background:#c6c6c6;"></div>
<div class="rn" style="left:0.0px;top:35.0px;width:26.6px;height:13.6px;font-size:10.60px;">1</div>
<div style="left:0.0px;top:46.0px;width:25.6px;height:1.2px;background:#e1e1e1;"></div>
<div class="rn" style="left:0.0px;top:55.0px;width:26.6px;height:13.6px;font-size:10.60px;">2</div>
<div style="left:0.0px;top:66.3px;width:25.6px;height:1.2px;background:#e1e1e1;"></div>
<div class="rn" style="left:0.0px;top:75.0px;width:26.6px;height:13.6px;font-size:10.60px;">3</div>
<div style="left:0.0px;top:86.5px;width:25.6px;height:1.2px;background:#e1e1e1;"></div>
<div class="rn" style="left:0.0px;top:95.0px;width:26.6px;height:13.6px;font-size:10.60px;">4</div>
<div style="left:0.0px;top:106.8px;width:25.6px;height:1.2px;background:#e1e1e1;"></div>
<div class="rn" style="left:0.0px;top:115.0px;width:26.6px;height:13.6px;font-size:10.60px;">5</div>
<div style="left:0.0px;top:127.0px;width:25.6px;height:1.2px;background:#e1e1e1;"></div>
<div class="rn" style="left:0.0px;top:136.0px;width:26.6px;height:13.6px;font-size:10.60px;">6</div>
<div style="left:0.0px;top:147.3px;width:25.6px;height:1.2px;background:#e1e1e1;"></div>
<div class="rn" style="left:0.0px;top:156.0px;width:26.6px;height:13.6px;font-size:10.60px;">7</div>
<div style="left:0.0px;top:167.5px;width:25.6px;height:1.2px;background:#e1e1e1;"></div>
<div class="rn" style="left:0.0px;top:176.0px;width:26.6px;height:13.6px;font-size:10.60px;">8</div>
<div style="left:0.0px;top:187.8px;width:25.6px;height:1.2px;background:#e1e1e1;"></div>
<div class="rn" style="left:0.0px;top:196.0px;width:26.6px;height:13.6px;font-size:10.60px;">9</div>
<div style="left:0.0px;top:208.0px;width:25.6px;height:1.2px;background:#e1e1e1;"></div>
<div class="rn" style="left:0.0px;top:217.0px;width:26.6px;height:13.6px;font-size:10.60px;">10</div>
<div style="left:0.0px;top:228.3px;width:25.6px;height:1.2px;background:#e1e1e1;"></div>
<div class="rn" style="left:0.0px;top:237.0px;width:26.6px;height:13.6px;font-size:10.60px;">11</div>
<div style="left:0.0px;top:248.5px;width:25.6px;height:1.2px;background:#e1e1e1;"></div>
<div class="rn" style="left:0.0px;top:257.0px;width:26.6px;height:13.6px;font-size:10.60px;">12</div>
<div style="left:0.0px;top:268.8px;width:25.6px;height:1.2px;background:#e1e1e1;"></div>
<div class="rn" style="left:0.0px;top:277.0px;width:26.6px;height:13.6px;font-size:10.60px;">13</div>
<div style="left:0.0px;top:289.0px;width:25.6px;height:1.2px;background:#e1e1e1;"></div>
<div class="rn" style="left:0.0px;top:298.0px;width:26.6px;height:13.6px;font-size:10.60px;">14</div>
<div style="left:0.0px;top:309.3px;width:25.6px;height:1.2px;background:#e1e1e1;"></div>
<div class="rn" style="left:0.0px;top:318.0px;width:26.6px;height:13.6px;font-size:10.60px;">15</div>
<div style="left:0.0px;top:329.5px;width:25.6px;height:1.2px;background:#e1e1e1;"></div>
<div class="rn" style="left:0.0px;top:338.0px;width:26.6px;height:13.6px;font-size:10.60px;">16</div>
<div style="left:0.0px;top:349.8px;width:25.6px;height:1.2px;background:#e1e1e1;"></div>
<div class="rn" style="left:0.0px;top:359.0px;width:26.6px;height:13.6px;font-size:10.60px;">17</div>
<div class="rn" style="left:0.0px;top:412.0px;width:26.6px;height:13.6px;font-size:10.60px;">20</div>
<div style="left:0.0px;top:423.4px;width:25.6px;height:1.2px;background:#e1e1e1;"></div>
<div class="rn" style="left:0.0px;top:432.0px;width:26.6px;height:13.6px;font-size:10.60px;">21</div>
<div style="left:0.0px;top:443.6px;width:25.6px;height:1.2px;background:#e1e1e1;"></div>
<div class="rn" style="left:0.0px;top:452.0px;width:26.6px;height:13.6px;font-size:10.60px;">22</div>
<div style="left:0.0px;top:463.9px;width:25.6px;height:1.2px;background:#e1e1e1;"></div>
<div class="rn" style="left:0.0px;top:473.0px;width:26.6px;height:13.6px;font-size:10.60px;">23</div>
<div style="left:0.0px;top:484.1px;width:25.6px;height:1.2px;background:#e1e1e1;"></div>
<div class="rn" style="left:0.0px;top:493.0px;width:26.6px;height:13.6px;font-size:10.60px;">24</div>
<div style="left:0.0px;top:504.4px;width:25.6px;height:1.2px;background:#e1e1e1;"></div>
<div class="rn" style="left:0.0px;top:513.0px;width:26.6px;height:13.6px;font-size:10.60px;">25</div>
<div style="left:0.0px;top:524.6px;width:25.6px;height:1.2px;background:#e1e1e1;"></div>
<div class="rn" style="left:0.0px;top:533.0px;width:26.6px;height:13.6px;font-size:10.60px;">26</div>
<div style="left:0.0px;top:544.9px;width:25.6px;height:1.2px;background:#e1e1e1;"></div>
<div class="rn" style="left:0.0px;top:554.0px;width:26.6px;height:13.6px;font-size:10.60px;">27</div>
<div style="left:0.0px;top:565.1px;width:25.6px;height:1.2px;background:#e1e1e1;"></div>
<div class="rn" style="left:0.0px;top:574.0px;width:26.6px;height:13.6px;font-size:10.60px;">28</div>
<div style="left:0.0px;top:585.4px;width:25.6px;height:1.2px;background:#e1e1e1;"></div>
<div class="rn" style="left:0.0px;top:594.0px;width:26.6px;height:13.6px;font-size:10.60px;">29</div>
<div style="left:0.0px;top:605.6px;width:25.6px;height:1.2px;background:#e1e1e1;"></div>
<div class="rn" style="left:0.0px;top:614.0px;width:26.6px;height:13.6px;font-size:10.60px;">30</div>
<div style="left:0.0px;top:625.9px;width:25.6px;height:1.2px;background:#e1e1e1;"></div>
<div class="rn" style="left:0.0px;top:635.0px;width:26.6px;height:13.6px;font-size:10.60px;">31</div>
<div style="left:0.0px;top:646.1px;width:25.6px;height:1.2px;background:#e1e1e1;"></div>
<div class="rn" style="left:0.0px;top:655.0px;width:26.6px;height:13.6px;font-size:10.60px;">32</div>
<div style="left:0.0px;top:666.4px;width:25.6px;height:1.2px;background:#e1e1e1;"></div>
<div class="rn" style="left:0.0px;top:675.0px;width:26.6px;height:13.6px;font-size:10.60px;">33</div>
<div style="left:0.0px;top:686.6px;width:25.6px;height:1.2px;background:#e1e1e1;"></div>
<div class="rn" style="left:0.0px;top:695.0px;width:26.6px;height:13.6px;font-size:10.60px;">34</div>
<div style="left:0.0px;top:706.9px;width:25.6px;height:1.2px;background:#e1e1e1;"></div>
<div class="rn" style="left:0.0px;top:716.0px;width:26.6px;height:13.6px;font-size:10.60px;">35</div>
<div style="left:0.0px;top:727.1px;width:25.6px;height:1.2px;background:#e1e1e1;"></div>
<div class="rn" style="left:0.0px;top:736.0px;width:26.6px;height:13.6px;font-size:10.60px;">36</div>
<div style="left:0.0px;top:747.4px;width:25.6px;height:1.2px;background:#e1e1e1;"></div>
<div class="rn" style="left:0.0px;top:756.0px;width:26.6px;height:13.6px;font-size:10.60px;">37</div>
<div style="left:0.0px;top:767.6px;width:25.6px;height:1.2px;background:#e1e1e1;"></div>
<div class="rn" style="left:0.0px;top:776.0px;width:26.6px;height:13.6px;font-size:10.60px;">38</div>
<div style="left:0.0px;top:787.9px;width:25.6px;height:1.2px;background:#e1e1e1;"></div>
<div class="rn" style="left:0.0px;top:797.0px;width:26.6px;height:13.6px;font-size:10.60px;">39</div>
<div style="left:0.0px;top:808.2px;width:25.6px;height:1.2px;background:#e1e1e1;"></div>
<div class="rn" style="left:0.0px;top:817.0px;width:26.6px;height:13.6px;font-size:10.60px;">40</div>
<div style="left:0.0px;top:828.4px;width:25.6px;height:1.2px;background:#e1e1e1;"></div>
<div class="rn" style="left:0.0px;top:837.0px;width:26.6px;height:13.6px;font-size:10.60px;">41</div>
<div style="left:0.0px;top:848.7px;width:25.6px;height:1.2px;background:#e1e1e1;"></div>
<div class="rn" style="left:0.0px;top:857.0px;width:26.6px;height:13.6px;font-size:10.60px;">42</div>
<div style="left:0.0px;top:868.9px;width:25.6px;height:1.2px;background:#e1e1e1;"></div>
<div class="rn" style="left:0.0px;top:878.0px;width:26.6px;height:13.6px;font-size:10.60px;">43</div>
<div style="left:0.0px;top:889.2px;width:25.6px;height:1.2px;background:#e1e1e1;"></div>
<div class="rn" style="left:0.0px;top:898.0px;width:26.6px;height:13.6px;font-size:10.60px;">44</div>
<div style="left:0.0px;top:909.4px;width:25.6px;height:1.2px;background:#e1e1e1;"></div>
<div class="rn" style="left:0.0px;top:918.0px;width:26.6px;height:13.6px;font-size:10.60px;">45</div>
<div style="left:0.0px;top:929.7px;width:25.6px;height:1.2px;background:#e1e1e1;"></div>
<div style="left:0.0px;top:369.5px;width:26.8px;height:2.5px;background:#1a7041;"></div>
</div>
<!-- title bar -->
<div style="left:0.0px;top:0.0px;width:1946.0px;height:85.0px;background:linear-gradient(#35815a 0,#2c7b52 35px,#237548 62px,#217346 84px,#1b6a3e 84px,#1b6a3e 85px);"></div>
<svg style="left:33px;top:13px" width="26" height="26" viewBox="0 0 26 26"><path d="M2.900 12.500 L13 4.400 L23.100 12.500" fill="none" stroke="#fff" stroke-width="2.300" stroke-linejoin="miter"/><path d="M5 22.900 V16.300 L13 9.300 L21 16.300 V22.900 A0.500 0.500 0 0 1 20.500 23.400 H15.800 V16.200 H10.500 V23.400 H5.500 A0.500 0.500 0 0 1 5 22.900 Z" fill="#fff"/></svg>
<svg style="left:77px;top:16px" width="22" height="22" viewBox="0 0 22 22"><path d="M3.200 1.300 H18.800 A2 2 0 0 1 20.800 3.300 V18.800 A2 2 0 0 1 18.800 20.800 H4.400 L1.200 17.800 V3.300 A2 2 0 0 1 3.200 1.300 Z M3.900 3.100 V9.300 A1.200 1.200 0 0 0 5.100 10.500 H16.200 A1.200 1.200 0 0 0 17.400 9.300 V3.100 Z M6.600 15.400 A1.500 1.500 0 0 1 8.100 13.900 H13.500 A1.500 1.500 0 0 1 15 15.400 V19.200 H11.600 V16.700 H8.200 V19.200 H6.600 Z" fill="#fff" fill-rule="evenodd"/></svg>
<svg style="left:118px;top:15px" width="26" height="24" viewBox="0 0 26 24"><path d="M9.900 3.500 L3.400 9.500 L9.600 15.300 M3.800 9.400 H15.600 A5.600 5.600 0 0 1 15.900 20.600 H15.300" fill="none" stroke="#fff" stroke-width="2.500" stroke-linecap="round" stroke-linejoin="round"/></svg>
<svg style="left:149.5px;top:24.6px" width="8" height="6"><path d="M0.2 0.4H7.4L3.8 5.4Z" fill="#cfe0d6"/></svg>
<svg style="left:172px;top:15px" width="26" height="25" viewBox="0 0 26 25"><path d="M5.900 6.900 A8.300 8.300 0 1 0 17.700 6.900" fill="none" stroke="#76a98c" stroke-width="2.600" stroke-linecap="round"/><path d="M13 14.500 V4.300 H22" fill="none" stroke="#76a98c" stroke-width="2.500" stroke-linecap="round" stroke-linejoin="miter"/></svg>
<svg style="left:221px;top:23px" width="12" height="11"><rect x="0.8" y="0.6" width="10.4" height="2" rx="0.6" fill="#fff"/><path d="M0.8 4.8H11.2L6 10.4Z" fill="#fff"/></svg>
<svg style="left:842px;top:16px" width="20" height="22" viewBox="0 0 20 22"><path d="M5 0.6 H13.6 L18.6 5.6 V20.8 H5 Z" fill="#f2f6f3"/><path d="M13.6 0.6 V5.6 H18.6 Z" fill="#c9dccf"/><rect x="11" y="7" width="6" height="8.6" fill="#c2d8ca"/><rect x="0.6" y="5" width="10.6" height="11" rx="1" fill="#6aa583"/><path d="M3.4 7.6 L8.4 13.6 M8.4 7.6 L3.4 13.6" stroke="#f2f6f3" stroke-width="1.5"/></svg>
<div class="t" style="left:868.5px;top:19.0px;width:274.1px;height:20.3px;font-size:18.30px;color:#fff;letter-spacing:-0.030px;font-weight:bold;">Trading Journal - Version 3</div>
<div style="left:1641.0px;top:14.3px;width:243.0px;height:25.4px;background:#236740;border-radius:5px;"></div>
<svg style="left:1647px;top:17.5px" width="28" height="18" viewBox="0 0 28 18"><circle cx="8" cy="7.4" r="5.4" fill="none" stroke="#fff" stroke-width="1.5"/><path d="M11.8 11.4 L16.6 16.4" stroke="#fff" stroke-width="1.6" stroke-linecap="round"/><path d="M19.4 8 L22.4 10.8 L25.4 8" fill="none" stroke="#fff" stroke-width="1.5" stroke-linecap="round" stroke-linejoin="round"/></svg>
<div class="t" style="left:1679.0px;top:20.0px;width:143.2px;height:19.2px;font-size:17.20px;color:#8fb8a0;letter-spacing:-0.094px;-webkit-text-stroke:0.300px #8fb8a0;">Search Sheet</div>
<svg style="left:1904px;top:13.5px" width="27" height="27" viewBox="0 0 27 27"><path d="M9.6 0.8 H24.4 V11.8 H19.2 L16.6 15 V11.8 H14.6 L9.6 6.800 Z" fill="#fff"/><circle cx="9.6" cy="12.600" r="5.6" fill="#217346"/><circle cx="9.6" cy="12.6" r="4.2" fill="#fff"/><path d="M1.2 25.8 C1.2 20.4 4.6 18.2 9.6 18.200 C14.6 18.2 18 20.4 18 25.8 Z" fill="#fff"/></svg>
<svg style="left:1816px;top:58.5px" width="27" height="19" viewBox="0 0 27 19"><circle cx="8.2" cy="5" r="4" fill="#dfeae3"/><path d="M1.2 17.6 C1.2 12.6 4 10.4 8.2 10.4 C12.4 10.4 15.2 12.6 15.2 17.6 Z" fill="#dfeae3"/><path d="M20 4.600 V15 M14.800 9.800 H25.200" stroke="#dfeae3" stroke-width="2.600"/></svg>
<div class="t" style="left:1846.7px;top:57.0px;width:87.2px;height:20.6px;font-size:18.60px;color:#e4eee8;letter-spacing:-0.615px;-webkit-text-stroke:0.550px #e4eee8;">Share</div>
<svg style="left:1908px;top:63px" width="17" height="11"><path d="M2.400 9.200 L8.300 3.400 L14.200 9.200" fill="none" stroke="#dfeae3" stroke-width="2.900" stroke-linecap="round" stroke-linejoin="round"/></svg>
<div style="left:685.3px;top:54.8px;width:71.6px;height:31.0px;background:linear-gradient(#fdfdfd,#f5f5f5);border-radius:4.5px 4.5px 0 0;"></div>
<div class="t" style="left:29.7px;top:59.0px;width:88.8px;height:20.2px;font-size:18.20px;color:#e1ece5;letter-spacing:0.069px;-webkit-text-stroke:0.450px #e1ece5;">Home</div>
<div class="t" style="left:114.8px;top:59.0px;width:87.8px;height:20.2px;font-size:18.20px;color:#e1ece5;letter-spacing:0.460px;-webkit-text-stroke:0.450px #e1ece5;">Insert</div>
<div class="t" style="left:199.4px;top:59.0px;width:81.8px;height:20.2px;font-size:18.20px;color:#e1ece5;letter-spacing:-0.232px;-webkit-text-stroke:0.450px #e1ece5;">Draw</div>
<div class="t" style="left:277.4px;top:59.0px;width:141.8px;height:20.2px;font-size:18.20px;color:#e1ece5;letter-spacing:-0.039px;-webkit-text-stroke:0.450px #e1ece5;">Page Layout</div>
<div class="t" style="left:416.4px;top:59.0px;width:116.6px;height:20.2px;font-size:18.20px;color:#e1ece5;letter-spacing:0.101px;-webkit-text-stroke:0.450px #e1ece5;">Formulas</div>
<div class="t" style="left:529.7px;top:59.0px;width:78.3px;height:20.2px;font-size:18.20px;color:#e1ece5;letter-spacing:-0.064px;-webkit-text-stroke:0.450px #e1ece5;">Data</div>
<div class="t" style="left:604.2px;top:59.0px;width:98.4px;height:20.2px;font-size:18.20px;color:#e1ece5;letter-spacing:-0.259px;-webkit-text-stroke:0.450px #e1ece5;">Review</div>
<div class="t" style="left:700.9px;top:59.0px;width:78.8px;height:20.2px;font-size:18.20px;color:#1e7145;letter-spacing:-0.110px;-webkit-text-stroke:0.450px #1e7145;">View</div>
<div class="t" style="left:777.4px;top:59.0px;width:124.1px;height:20.2px;font-size:18.20px;color:#e1ece5;letter-spacing:0.139px;-webkit-text-stroke:0.450px #e1ece5;">Developer</div>
<div class="t" style="left:899.3px;top:59.0px;width:104.4px;height:20.2px;font-size:18.20px;color:#e1ece5;letter-spacing:0.284px;-webkit-text-stroke:0.450px #e1ece5;">Acrobat</div>
<!-- ribbon -->
<div style="left:0.0px;top:85.0px;width:1946.0px;height:95.4px;background:linear-gradient(#f7f7f7,#f3f3f3);"></div>
<div style="left:0.0px;top:180.2px;width:1946.0px;height:1.4px;background:#c3c3c3;"></div>
<div style="left:276.8px;top:90.5px;width:1.2px;height:83.5px;background:#dcdcdc;"></div>
<div style="left:519.0px;top:90.5px;width:1.2px;height:83.5px;background:#dcdcdc;"></div>
<div style="left:798.6px;top:90.5px;width:1.2px;height:83.5px;background:#dcdcdc;"></div>
<div style="left:1320.2px;top:90.5px;width:1.2px;height:83.5px;background:#dcdcdc;"></div>
<div style="left:11.2px;top:90.9px;width:51.0px;height:50.4px;background:linear-gradient(#cfcfcf,#d6d6d6);border:1px solid #bdbdbd;border-radius:5px;"></div>
<svg style="left:17px;top:99px" width="40" height="36" viewBox="0 0 40 36"><rect x="1.2" y="1.3" width="37" height="32.600" rx="1.6" fill="#fff" stroke="#8f8f8f" stroke-width="1.3"/><path d="M10.600 1.600V33.600M19.800 1.600V33.600M29 1.600V33.600M1.6 6H38M1.600 10.600H38M1.600 15.200H38M1.600 19.800H38M1.600 24.400H38M1.600 29H38" stroke="#b9b9b9" stroke-width="0.9" fill="none"/></svg>
<div class="t" style="left:12.7px;top:145.0px;width:87.4px;height:16.5px;font-size:14.50px;color:#111;letter-spacing:0.127px;-webkit-text-stroke:0.250px #111;">Normal</div>
<svg style="left:88px;top:99px" width="40" height="36" viewBox="0 0 40 36"><rect x="1.2" y="1.3" width="36.800" height="32.600" rx="1.4" fill="#fff" stroke="#a9a9a9" stroke-width="1.2"/><path d="M10.400 1.800V33.400M19.400 1.800V33.400M1.800 6.400H37.400M1.800 11.400H37.400M1.800 16.400H37.400M1.800 27.600H37.400" stroke="#c6d9f1" stroke-width="1" fill="none"/><path d="M29.600 1.800V33.400M1.800 22.600H37.400" stroke="#6f6f6f" stroke-width="1.1" stroke-dasharray="2.600 1.700" fill="none"/></svg>
<div class="t" style="left:70.0px;top:145.0px;width:115.5px;height:16.5px;font-size:14.50px;color:#111;letter-spacing:-0.037px;-webkit-text-stroke:0.250px #111;">Page Break</div>
<div class="t" style="left:81.7px;top:161.0px;width:92.2px;height:16.5px;font-size:14.50px;color:#111;letter-spacing:0.097px;-webkit-text-stroke:0.250px #111;">Preview</div>
<svg style="left:162px;top:97px" width="35" height="40" viewBox="0 0 35 40"><path d="M2 1.400 H22.600 L32.400 11.200 V36.200 A1.400 1.400 0 0 1 31 37.600 H2 A1 1 0 0 1 1.200 36.600 V2.200 Z" fill="#fbfbfb" stroke="#9d9d9d" stroke-width="1.2"/><path d="M22.600 1.400 V11.200 H32.400 Z" fill="#e6e6e6" stroke="#9d9d9d" stroke-width="1"/><path d="M5.600 7.400H20.600V12.400H28.800V33H5.600Z M13.200 7.400V33M20.600 12.400V33M5.600 12.400H20.600M5.600 17.600H28.800M5.600 22.800H28.800M5.600 28H28.800" fill="none" stroke="#b4b4b4" stroke-width="1.1"/></svg>
<div class="t" style="left:162.3px;top:145.0px;width:73.0px;height:16.5px;font-size:14.50px;color:#111;letter-spacing:-0.286px;-webkit-text-stroke:0.250px #111;">Page</div>
<div class="t" style="left:156.9px;top:161.0px;width:83.9px;height:16.5px;font-size:14.50px;color:#111;letter-spacing:0.065px;-webkit-text-stroke:0.250px #111;">Layout</div>
<svg style="left:216px;top:95px" width="41" height="41" viewBox="0 0 41 41"><path d="M9.800 3.600H37.600M9.800 1.400V5.800M37.600 1.400V5.800M3.800 9.800V38M1.600 9.800H6M1.600 38H6" stroke="#d4d4d4" stroke-width="1.100" fill="none"/><rect x="9.400" y="9.600" width="28" height="27.800" rx="1.600" fill="#f4f4f4" stroke="#dadada" stroke-width="1.200"/><rect x="13" y="13" width="21" height="5.200" fill="#d3dbe8"/><path d="M13 25V21.600H16.600M30.400 21.600H34V25M13 30.400V34H16.600M30.400 34H34V30.400" stroke="#dadada" stroke-width="1.100" fill="none"/></svg>
<div class="t" style="left:212.2px;top:145.0px;width:90.8px;height:16.5px;font-size:14.50px;color:#a8a8a8;letter-spacing:0.170px;-webkit-text-stroke:0.250px #a8a8a8;">Custom</div>
<div class="t" style="left:218.4px;top:161.0px;width:78.4px;height:16.5px;font-size:14.50px;color:#a8a8a8;letter-spacing:-0.006px;-webkit-text-stroke:0.250px #a8a8a8;">Views</div>
<div style="left:294.2px;top:103.2px;width:18.4px;height:17.8px;background:#f2f2f2;border:1px solid #dadada;border-radius:3.5px;"></div>
<svg style="left:294.4px;top:101.6px" width="20" height="20" viewBox="0 0 20 20"><path d="M4.200 10.200 L8.600 14.800 L16.800 2.200" fill="none" stroke="#bcbcbc" stroke-width="2.900" stroke-linejoin="miter"/></svg>
<div style="left:294.2px;top:143.8px;width:18.4px;height:17.8px;background:linear-gradient(#ffffff,#ececec);border:1px solid #c2c2c2;border-radius:3.5px;"></div>
<div style="left:395.6px;top:103.2px;width:18.4px;height:17.8px;background:linear-gradient(#ffffff,#ececec);border:1px solid #c2c2c2;border-radius:3.5px;"></div>
<svg style="left:395.8px;top:101.6px" width="20" height="20" viewBox="0 0 20 20"><path d="M4.200 10.200 L8.600 14.800 L16.800 2.200" fill="none" stroke="#3c3c3c" stroke-width="2.900" stroke-linejoin="miter"/></svg>
<div style="left:395.6px;top:143.8px;width:18.4px;height:17.8px;background:linear-gradient(#ffffff,#ececec);border:1px solid #c2c2c2;border-radius:3.5px;"></div>
<svg style="left:395.8px;top:142.2px" width="20" height="20" viewBox="0 0 20 20"><path d="M4.200 10.200 L8.600 14.800 L16.800 2.200" fill="none" stroke="#3c3c3c" stroke-width="2.900" stroke-linejoin="miter"/></svg>
<div class="t" style="left:323.0px;top:106.0px;width:72.6px;height:16.5px;font-size:14.50px;color:#a3a3a3;letter-spacing:-0.514px;-webkit-text-stroke:0.250px #a3a3a3;">Ruler</div>
<div class="t" style="left:323.0px;top:146.0px;width:96.4px;height:16.5px;font-size:14.50px;color:#111;letter-spacing:-0.100px;-webkit-text-stroke:0.250px #111;">Gridlines</div>
<div class="t" style="left:424.2px;top:106.0px;width:117.5px;height:16.5px;font-size:14.50px;color:#111;letter-spacing:-0.225px;-webkit-text-stroke:0.250px #111;">Formula Bar</div>
<div class="t" style="left:424.2px;top:146.0px;width:100.2px;height:16.5px;font-size:14.50px;color:#111;letter-spacing:-0.152px;-webkit-text-stroke:0.250px #111;">Headings</div>
<div class="t" style="left:535.1px;top:106.0px;width:77.4px;height:16.5px;font-size:14.50px;color:#111;letter-spacing:0.117px;-webkit-text-stroke:0.250px #111;">Zoom</div>
<div style="left:583.3px;top:96.7px;width:132.0px;height:30.9px;background:#fff;border:1.2px solid #c4c4c4;border-radius:4.5px;"></div>
<div style="left:695.4px;top:100.6px;width:1.0px;height:23.0px;background:#dedede;"></div>
<svg style="left:701.6px;top:109.4px" width="8" height="6"><path d="M0.300 0.300H7.100L3.700 5.300Z" fill="#5a5a5a"/></svg>
<div class="t" style="left:590.0px;top:103.0px;width:73.3px;height:18.6px;font-size:16.60px;color:#111;letter-spacing:0.050px;-webkit-text-stroke:0.250px #111;">75%</div>
<svg style="left:538px;top:140px" width="26" height="26" viewBox="0 0 26 26"><circle cx="10.800" cy="11" r="7.400" fill="none" stroke="#595959" stroke-width="2.300"/><path d="M16.400 16.600 L22.600 22.800" stroke="#595959" stroke-width="3" stroke-linecap="round"/><path d="M2 17.400 L17.400 2.400" stroke="#3f7fd0" stroke-width="1.800"/></svg>
<div class="t" style="left:570.0px;top:146.0px;width:137.9px;height:16.5px;font-size:14.50px;color:#111;letter-spacing:0.325px;-webkit-text-stroke:0.250px #111;">Zoom to 100%</div>
<svg style="left:735px;top:97px" width="38" height="39" viewBox="0 0 38 39"><rect x="1.600" y="1.600" width="29" height="23" fill="#fff" stroke="#cfcfcf" stroke-width="1"/><path d="M11.200 1.600V24.600M21 1.600V24.600M1.600 8.400H30.600M1.600 16.400H30.600" stroke="#d4d4d4" stroke-width="1" fill="none"/><rect x="10.400" y="8" width="20.400" height="16.800" fill="#6ea6e6"/><circle cx="19.600" cy="21.600" r="7.600" fill="#6ea6e6" stroke="#595959" stroke-width="2.600"/><path d="M19.600 15.400V27.800" stroke="#5b93d3" stroke-width="1"/><path d="M25.600 27.400 L33.800 35.400" stroke="#595959" stroke-width="3.200" stroke-linecap="round"/></svg>
<div class="t" style="left:726.4px;top:145.0px;width:94.7px;height:16.5px;font-size:14.50px;color:#111;letter-spacing:0.248px;-webkit-text-stroke:0.250px #111;">Zoom to</div>
<div class="t" style="left:722.9px;top:161.0px;width:101.8px;height:16.5px;font-size:14.50px;color:#111;letter-spacing:0.267px;-webkit-text-stroke:0.250px #111;">Selection</div>
<svg style="left:817px;top:96px" width="43" height="40" viewBox="0 0 43 40"><rect x="9.400" y="2.400" width="27" height="24" rx="1.600" fill="#f6f6f6" stroke="#a6a6a6" stroke-width="1.100"/><rect x="9.900" y="2.900" width="26" height="3.600" fill="#bdbdbd"/><rect x="2.200" y="5.400" width="28" height="24" rx="1.600" fill="#f8f8f8" stroke="#a6a6a6" stroke-width="1.100"/><rect x="2.700" y="5.900" width="27" height="3.600" fill="#c4c4c4"/><rect x="13.400" y="14.400" width="27.600" height="24" rx="1.600" fill="#fafafa" stroke="#8ab8ee" stroke-width="1.400"/><rect x="13.400" y="14.400" width="27.600" height="4.400" rx="1.200" fill="#5e9fe8"/></svg>
<div class="t" style="left:824.1px;top:145.0px;width:69.0px;height:16.5px;font-size:14.50px;color:#111;letter-spacing:-0.036px;-webkit-text-stroke:0.250px #111;">New</div>
<div class="t" style="left:812.1px;top:161.0px;width:92.9px;height:16.5px;font-size:14.50px;color:#111;letter-spacing:0.256px;-webkit-text-stroke:0.250px #111;">Window</div>
<svg style="left:886px;top:95px" width="31" height="42" viewBox="0 0 31 42"><rect x="1.600" y="1.800" width="27.600" height="18.400" rx="1.400" fill="#f4f4f4" stroke="#dcdcdc" stroke-width="1.100"/><rect x="2.100" y="2.400" width="26.600" height="3.400" fill="#e2e2e2"/><rect x="1.600" y="21.400" width="27.600" height="18.600" rx="1.400" fill="#f4f4f4" stroke="#dcdcdc" stroke-width="1.100"/><rect x="2.100" y="22" width="26.600" height="3.400" fill="#e2e2e2"/></svg>
<div class="t" style="left:875.2px;top:145.0px;width:92.8px;height:16.5px;font-size:14.50px;color:#a8a8a8;letter-spacing:0.197px;-webkit-text-stroke:0.250px #a8a8a8;">Arrange</div>
<div class="t" style="left:893.5px;top:161.0px;width:56.3px;height:16.5px;font-size:14.50px;color:#a8a8a8;letter-spacing:0.102px;-webkit-text-stroke:0.250px #a8a8a8;">All</div>
<svg style="left:0;top:0" width="0" height="0"><defs><pattern id="hat" width="4.600" height="4.600" patternUnits="userSpaceOnUse" patternTransform="rotate(-45)"><rect width="4.600" height="4.600" fill="#fff"/><rect width="4.600" height="2.300" fill="#93bdec"/></pattern></defs></svg>
<svg style="left:942.0px;top:98px" width="40" height="36" viewBox="0 0 40 36"><rect x="1.200" y="1.300" width="36.600" height="32.400" rx="1.400" fill="#fdfdfd" stroke="#9d9d9d" stroke-width="1.200"/><path d="M13.400 9.600V33.400M25.600 9.600V33.400M1.800 17.400H37.400M1.800 25.400H37.400" stroke="#d0d0d0" stroke-width="1.100" fill="none"/><path d="M1.800 1.900H37.200V9.600H13.400V33.100H1.800Z" fill="url(#hat)"/><rect x="13.400" y="10" width="12.200" height="7.400" fill="#b9b9bd" stroke="#9a9a9a" stroke-width="0.800"/></svg>
<div class="t" style="left:939.3px;top:145.0px;width:84.2px;height:16.5px;font-size:14.50px;color:#111;letter-spacing:-0.179px;-webkit-text-stroke:0.250px #111;">Freeze</div>
<div class="t" style="left:941.6px;top:161.0px;width:79.6px;height:16.5px;font-size:14.50px;color:#111;letter-spacing:-0.377px;-webkit-text-stroke:0.250px #111;">Panes</div>
<svg style="left:1003.2px;top:98px" width="40" height="36" viewBox="0 0 40 36"><rect x="1.200" y="1.300" width="36.600" height="32.400" rx="1.400" fill="#fdfdfd" stroke="#9d9d9d" stroke-width="1.200"/><path d="M12.400 9.600V33.400M25 9.600V33.400M1.800 17.400H37.400M1.800 25.400H37.400" stroke="#d0d0d0" stroke-width="1.100" fill="none"/><path d="M1.800 1.900H37.200V9.600H1.800Z" fill="url(#hat)"/></svg>
<div class="t" style="left:1000.7px;top:145.0px;width:84.2px;height:16.5px;font-size:14.50px;color:#111;letter-spacing:-0.179px;-webkit-text-stroke:0.250px #111;">Freeze</div>
<div class="t" style="left:994.9px;top:161.0px;width:95.8px;height:16.5px;font-size:14.50px;color:#111;letter-spacing:-0.113px;-webkit-text-stroke:0.250px #111;">Top Row</div>
<svg style="left:1079.8px;top:98px" width="40" height="36" viewBox="0 0 40 36"><rect x="1.200" y="1.300" width="36.600" height="32.400" rx="1.400" fill="#fdfdfd" stroke="#9d9d9d" stroke-width="1.200"/><path d="M12.800 1.800V33.400M25 1.800V33.400M1.800 9.600H37.400M1.800 17.400H37.400M1.800 25.400H37.400" stroke="#d0d0d0" stroke-width="1.100" fill="none"/><path d="M1.800 1.900H12.800V33.100H1.800Z" fill="url(#hat)"/></svg>
<div class="t" style="left:1060.7px;top:145.0px;width:118.7px;height:16.5px;font-size:14.50px;color:#111;letter-spacing:0.122px;-webkit-text-stroke:0.250px #111;">Freeze First</div>
<div class="t" style="left:1074.7px;top:161.0px;width:90.6px;height:16.5px;font-size:14.50px;color:#111;letter-spacing:0.129px;-webkit-text-stroke:0.250px #111;">Column</div>
<svg style="left:1155px;top:91.4px" width="23" height="20" viewBox="0 0 23 20"><rect x="1.200" y="1.200" width="20.400" height="17.200" rx="1.600" fill="#fbfbfb" stroke="#a3a3a3" stroke-width="1.100"/><rect x="1.700" y="1.800" width="19.400" height="3.200" fill="#c8c8c8"/><path d="M2.200 11.200H21" stroke="#2f7bd6" stroke-width="1.300" stroke-dasharray="2.400 1.400"/></svg>
<div class="t" style="left:1184.1px;top:94.0px;width:69.5px;height:16.5px;font-size:14.50px;color:#111;letter-spacing:0.324px;-webkit-text-stroke:0.250px #111;">Split</div>
<svg style="left:1154px;top:120px" width="25" height="25" viewBox="0 0 25 25"><rect x="2.200" y="5" width="19.600" height="16.800" rx="1.200" fill="#f3f3f3"/><path d="M2.200 5.200 H21.800 V8 H2.200Z" fill="#e3e8ef"/><path d="M2.200 2.400 H21.800 V21" fill="none" stroke="#c9c9c9" stroke-width="1" stroke-dasharray="1.400 1.600"/><path d="M2.200 5 V20.600 A1 1 0 0 0 3.200 21.600 H21.800" fill="none" stroke="#7fb2ee" stroke-width="1.300"/><path d="M2.200 4.600 L5.800 7.800 H2.200Z" fill="#5e9fe8"/><path d="M1 1.400 L23.600 23" stroke="#4a4a4a" stroke-width="1.200"/></svg>
<div class="t" style="left:1184.5px;top:126.0px;width:69.8px;height:16.5px;font-size:14.50px;color:#111;letter-spacing:0.001px;-webkit-text-stroke:0.250px #111;">Hide</div>
<svg style="left:1155px;top:155.400px" width="23" height="20" viewBox="0 0 23 20"><rect x="1.200" y="1.200" width="20.400" height="17.200" rx="1.600" fill="#f3f3f3" stroke="#cfe0f5" stroke-width="1.200"/><rect x="1.400" y="1.400" width="20" height="3" fill="#cfe0f5"/></svg>
<div class="t" style="left:1184.5px;top:156.0px;width:86.5px;height:16.5px;font-size:14.50px;color:#a8a8a8;letter-spacing:0.107px;-webkit-text-stroke:0.250px #a8a8a8;">Unhide</div>
<svg style="left:1252px;top:99.400px" width="39" height="35" viewBox="0 0 39 35"><rect x="1.400" y="2.400" width="15.600" height="13.600" rx="1.400" fill="#f8f8f8" stroke="#a9a9a9" stroke-width="1"/><rect x="1.900" y="2.900" width="14.600" height="3" fill="#c4c4c4"/><rect x="20" y="2.400" width="15.600" height="13.600" rx="1.400" fill="#f8f8f8" stroke="#a9a9a9" stroke-width="1"/><rect x="20.500" y="2.900" width="14.600" height="3" fill="#c4c4c4"/><rect x="1.400" y="19.600" width="15.600" height="13.400" rx="1.400" fill="#f8f8f8" stroke="#a9a9a9" stroke-width="1"/><rect x="1.900" y="20.100" width="14.600" height="3" fill="#c4c4c4"/><rect x="12" y="12.800" width="19.600" height="16.400" rx="1.400" fill="#fafafa" stroke="#8ab8ee" stroke-width="1.300"/><rect x="12" y="12.800" width="19.600" height="3.600" rx="1" fill="#5e9fe8"/></svg>
<svg style="left:1295.800px;top:113.300px" width="8" height="6"><path d="M0.300 0.300H7.100L3.700 5.300Z" fill="#5a5a5a"/></svg>
<div class="t" style="left:1254.6px;top:145.0px;width:84.3px;height:16.5px;font-size:14.50px;color:#111;letter-spacing:0.320px;-webkit-text-stroke:0.250px #111;">Switch</div>
<div class="t" style="left:1246.8px;top:161.0px;width:100.0px;height:16.5px;font-size:14.50px;color:#111;letter-spacing:0.200px;-webkit-text-stroke:0.250px #111;">Windows</div>
<svg style="left:1336.0px;top:95px" width="44" height="40" viewBox="0 0 44 40"><path d="M10.600 31.600 V9.400 A5.400 5.400 0 0 1 16 4 H36.400 A4.600 4.600 0 0 0 32 8.600 V33 A5 5 0 0 1 27 38 H22.600 L10.600 31.600Z" fill="#fbfbfb" stroke="#9a9a9a" stroke-width="1.100"/><path d="M32.400 11.200 H41.600 A4.800 5.400 0 0 0 32.400 9 Z" fill="#e07b50" stroke="#c96a42" stroke-width="0.800"/><path d="M1.800 30.600 H23.600 A3.600 3.600 0 0 0 27 38 H8.600 A7.200 7.200 0 0 1 1.800 30.600 Z" fill="#e07b50" stroke="#c96a42" stroke-width="0.800"/><path d="M13.400 9.600H26M13.400 12.400H29.400M13.400 15.200H24.400M13.400 18H27M13.400 20.800H20.600M13.400 23.600H24.400" stroke="#bcc6d6" stroke-width="1"/></svg>
<div class="t" style="left:1342.3px;top:145.0px;width:71.3px;height:16.5px;font-size:14.50px;color:#111;letter-spacing:0.042px;-webkit-text-stroke:0.250px #111;">View</div>
<div class="t" style="left:1333.7px;top:161.0px;width:88.7px;height:16.5px;font-size:14.50px;color:#111;letter-spacing:0.228px;-webkit-text-stroke:0.250px #111;">Macros</div>
<svg style="left:1392.6px;top:95px" width="44" height="40" viewBox="0 0 44 40"><path d="M10.600 31.600 V9.400 A5.400 5.400 0 0 1 16 4 H36.400 A4.600 4.600 0 0 0 32 8.600 V33 A5 5 0 0 1 27 38 H22.600 L10.600 31.600Z" fill="#fbfbfb" stroke="#9a9a9a" stroke-width="1.100"/><path d="M32.400 11.200 H41.600 A4.800 5.400 0 0 0 32.400 9 Z" fill="#e07b50" stroke="#c96a42" stroke-width="0.800"/><path d="M1.800 30.600 H23.600 A3.600 3.600 0 0 0 27 38 H8.600 A7.200 7.200 0 0 1 1.800 30.600 Z" fill="#e07b50" stroke="#c96a42" stroke-width="0.800"/><path d="M10 18V31" stroke="#a9a9a9" stroke-width="1.800"/><circle cx="11.800" cy="11.200" r="9" fill="#fafafa" stroke="#a9a9a9" stroke-width="1.100"/><circle cx="11.800" cy="11.200" r="6.200" fill="#e2505a"/></svg>
<div class="t" style="left:1391.8px;top:145.0px;width:86.8px;height:16.5px;font-size:14.50px;color:#111;letter-spacing:0.008px;-webkit-text-stroke:0.250px #111;">Record</div>
<div class="t" style="left:1394.5px;top:161.0px;width:81.3px;height:16.5px;font-size:14.50px;color:#111;letter-spacing:0.248px;-webkit-text-stroke:0.250px #111;">Macro</div>
<svg style="left:1468px;top:96px" width="44" height="40" viewBox="0 0 44 40"><rect x="1.400" y="1.600" width="41.200" height="36.800" rx="1.800" fill="#fff" stroke="#adadad" stroke-width="1.200"/><path d="M15.400 2V38M28.600 2V38M2 13.800H42M2 26.200H42" stroke="#dadada" stroke-width="1.100"/><rect x="1.800" y="13.800" width="13.600" height="12.400" fill="#a9c8ea" stroke="#4d8fdc" stroke-width="1.300"/><rect x="28.600" y="13.800" width="13.600" height="12.400" fill="#a9c8ea" stroke="#4d8fdc" stroke-width="1.300"/></svg>
<div class="t" style="left:1448.6px;top:145.0px;width:123.0px;height:16.5px;font-size:14.50px;color:#111;letter-spacing:0.071px;-webkit-text-stroke:0.250px #111;">Use Relative</div>
<div class="t" style="left:1452.4px;top:161.0px;width:115.3px;height:16.5px;font-size:14.50px;color:#111;letter-spacing:0.126px;-webkit-text-stroke:0.250px #111;">References</div>
<!-- formula bar -->
<div style="left:0.0px;top:181.6px;width:1946.0px;height:34.6px;background:linear-gradient(#fdfdfd,#ffffff 30%,#fdfdfd);"></div>
<div style="left:0.0px;top:181.8px;width:115.2px;height:33.2px;background:#fff;border-left:1.200px solid #b5b5b5;border-right:1.400px solid #b5b5b5;"></div>
<div class="t" style="left:14.4px;top:191.0px;width:77.0px;height:17.5px;font-size:15.50px;color:#111;letter-spacing:-0.015px;-webkit-text-stroke:0.250px #111;">R361</div>
<svg style="left:98px;top:187px" width="12" height="24"><path d="M1 7.400L5.500 1L10 7.400Z" fill="#6a6a6a"/><path d="M1 15.600L5.500 22.800L10 15.600Z" fill="#6a6a6a"/></svg>
<svg style="left:134px;top:191px" width="18" height="17"><path d="M2 1.800L15.200 15M15.200 1.800L2 15" stroke="#cdcdcd" stroke-width="2.500" fill="none"/></svg>
<svg style="left:172px;top:191px" width="21" height="17"><path d="M2 9.200L7.800 14.600L18.600 2" stroke="#cdcdcd" stroke-width="2.500" fill="none"/></svg>
<div class="t" style="left:213.4px;top:187.4px;width:30.0px;height:26.0px;font-family:'Liberation Serif',serif;font-style:italic;font-size:23.500px;color:#3c3c3c;letter-spacing:0px;-webkit-text-stroke:0.350px #3c3c3c;">f<span style="position:static;font-size:21.500px;">x</span></div>
<div style="left:243.2px;top:189.7px;width:1.0px;height:19.6px;background:#dcdcdc;"></div>
<svg style="left:1929.500px;top:194px" width="12" height="9"><path d="M0.800 0.800H10.800L5.800 7.800Z" fill="#5f5f5f"/></svg>
<!-- sheet tabs -->
<div style="left:0.0px;top:1148.0px;width:1946.0px;height:2.0px;background:#fff;"></div>
<div style="left:0.0px;top:1149.6px;width:1946.0px;height:35.6px;background:linear-gradient(#dadada 0,#dadada 1px,#f0f0f0 1px,#eeeeee 100%);"></div>
<div style="left:0.0px;top:1184.8px;width:1946.0px;height:1.1px;background:#a8a8a8;"></div>
<svg style="left:19px;top:1160px" width="12" height="16"><path d="M10.600 1.400V14.400L1.200 7.900Z" fill="#c4c4c4"/></svg>
<svg style="left:50.400px;top:1160px" width="12" height="16"><path d="M1 1.400V14.400L10.400 7.900Z" fill="#c4c4c4"/></svg>
<div style="left:81.0px;top:1152.0px;width:1.2px;height:26.6px;background:#d3d3d3;"></div>
<div style="left:212.0px;top:1152.0px;width:1.2px;height:26.6px;background:#d3d3d3;"></div>
<div style="left:736.1px;top:1152.0px;width:1.2px;height:26.6px;background:#d3d3d3;"></div>
<div style="left:918.8px;top:1152.0px;width:1.2px;height:26.6px;background:#d3d3d3;"></div>
<div style="left:1059.6px;top:1152.0px;width:1.2px;height:26.6px;background:#d3d3d3;"></div>
<div style="left:1232.3px;top:1152.0px;width:1.2px;height:26.6px;background:#d3d3d3;"></div>
<div style="left:1448.8px;top:1152.0px;width:1.2px;height:26.6px;background:#d3d3d3;"></div>
<div style="left:1618.7px;top:1152.0px;width:1.2px;height:26.6px;background:#d3d3d3;"></div>
<div style="left:1760.8px;top:1152.0px;width:1.2px;height:26.6px;background:#d3d3d3;"></div>
<div style="left:1812.3px;top:1152.0px;width:1.2px;height:26.6px;background:#d3d3d3;"></div>
<div style="left:319.6px;top:1148.6px;width:189.0px;height:31.8px;background:#fff;border:1.200px solid #c9c9c9;border-top:none;border-radius:0 0 5px 5px;box-shadow:0 1px 1.500px rgba(0,0,0,0.18);"></div>
<div class="t" style="left:105.8px;top:1159.0px;width:123.1px;height:19.3px;font-size:17.30px;color:#4f4f4f;letter-spacing:-0.493px;-webkit-text-stroke:0.250px #4f4f4f;">User Guide</div>
<div class="t" style="left:236.8px;top:1159.0px;width:98.9px;height:19.3px;font-size:17.30px;color:#4f4f4f;letter-spacing:-0.434px;-webkit-text-stroke:0.250px #4f4f4f;">Markets</div>
<div class="t" style="left:536.3px;top:1159.0px;width:212.7px;height:19.3px;font-size:17.30px;color:#4f4f4f;letter-spacing:-0.162px;-webkit-text-stroke:0.250px #4f4f4f;">Backtest -Performance</div>
<div class="t" style="left:762.8px;top:1159.0px;width:171.0px;height:19.3px;font-size:17.30px;color:#4f4f4f;letter-spacing:-0.106px;-webkit-text-stroke:0.250px #4f4f4f;">Backtest - Charts</div>
<div class="t" style="left:943.1px;top:1159.0px;width:132.4px;height:19.3px;font-size:17.30px;color:#4f4f4f;letter-spacing:-0.462px;-webkit-text-stroke:0.250px #4f4f4f;">Trading Plan</div>
<div class="t" style="left:1085.3px;top:1159.0px;width:161.9px;height:19.3px;font-size:17.30px;color:#4f4f4f;letter-spacing:-0.229px;-webkit-text-stroke:0.250px #4f4f4f;">Trading -Journal</div>
<div class="t" style="left:1259.6px;top:1159.0px;width:202.6px;height:19.3px;font-size:17.30px;color:#4f4f4f;letter-spacing:-0.265px;-webkit-text-stroke:0.250px #4f4f4f;">Trading -Performance</div>
<div class="t" style="left:1473.6px;top:1159.0px;width:160.3px;height:19.3px;font-size:17.30px;color:#4f4f4f;letter-spacing:-0.272px;-webkit-text-stroke:0.250px #4f4f4f;">Trading - Charts</div>
<div class="t" style="left:1643.5px;top:1159.0px;width:133.6px;height:19.3px;font-size:17.30px;color:#4f4f4f;letter-spacing:-0.288px;-webkit-text-stroke:0.250px #4f4f4f;">Benchmarks</div>
<div class="t" style="left:344.9px;top:1159.0px;width:177.5px;height:19.0px;font-size:17.00px;color:#1e7145;letter-spacing:-0.321px;font-weight:bold;">Backtest -Journal</div>
<svg style="left:1780px;top:1159px" width="16" height="16"><path d="M7.800 1V14.800M1 7.900H14.600" stroke="#3a3a3a" stroke-width="2.700"/></svg>
<!-- status bar -->
<div style="left:0.0px;top:1185.8px;width:1946.0px;height:30.2px;background:linear-gradient(#e1e1e1,#cecece);"></div>
<div class="t" style="left:33.5px;top:1193.0px;width:85.9px;height:18.6px;font-size:16.60px;color:#555;letter-spacing:-0.518px;-webkit-text-stroke:0.250px #555;">Ready</div>
<svg style="left:105px;top:1188px" width="28" height="24" viewBox="0 0 28 24"><circle cx="6.500" cy="5.700" r="3.300" fill="#555"/><path d="M11.200 4.200 H20.200" stroke="#555" stroke-width="1.300" fill="none"/><path d="M19.400 3.550 H20.600 A2.700 2.700 0 0 1 23.300 6.250 V7.300 H21.100 A2.100 2.100 0 0 0 19.400 4.850 Z" fill="#555"/><path d="M18.400 4.200 V17.400 A3.200 3.200 0 0 1 15.200 20.600 H13" stroke="#555" stroke-width="1.300" fill="none"/><path d="M3.200 17.300 H13.800 A3 3 0 0 0 15.400 20.700 H6.600 A3.400 3.400 0 0 1 3.200 17.300 Z" fill="#555"/><path d="M7.800 10.600 V17.400" stroke="#555" stroke-width="1.300" fill="none"/></svg>
<svg style="left:150px;top:1188px" width="24" height="24" viewBox="0 0 24 24"><path d="M2.500 7.700 Q6.200 9.900 9.900 10.100 Q13.600 9.900 17.200 7.400 M9.900 10.100 L7.700 12.600 L5.600 21 M9.900 10.100 L12 12.600 L11.500 17" fill="none" stroke="#555" stroke-width="3.100" stroke-linecap="round" stroke-linejoin="round"/><path d="M2.500 7.700 Q6.200 9.900 9.900 10.100 Q13.600 9.900 17.200 7.400 M9.900 10.100 L7.700 12.600 L5.600 21 M9.900 10.100 L12 12.600 L11.500 17" fill="none" stroke="#d9d9d9" stroke-width="0.900" stroke-linecap="round" stroke-linejoin="round"/><circle cx="9.900" cy="5.500" r="2.300" fill="#d9d9d9" stroke="#555" stroke-width="1.200"/><path d="M12.300 13.300 L20.800 21.600 M20.800 13.300 L12.300 21.600" stroke="#555" stroke-width="1.100" stroke-linecap="round"/></svg>
<div class="t" style="left:177.0px;top:1192.0px;width:226.7px;height:19.2px;font-size:17.20px;color:#555;letter-spacing:0.010px;-webkit-text-stroke:0.250px #555;">Accessibility: Investigate</div>
<div style="left:1515.4px;top:1185.6px;width:49.4px;height:30.4px;background:#a9a9a9;"></div>
<svg style="left:1530.500px;top:1192px" width="19" height="18" viewBox="0 0 19 18"><rect x="0.600" y="0.600" width="17.800" height="16.400" rx="1" fill="#fff"/><path d="M6.300 0.600V17M12.400 0.600V17M0.600 6H18.400M0.600 11.600H18.400" stroke="#a9a9a9" stroke-width="1.200"/></svg>
<svg style="left:1578.500px;top:1192px" width="20" height="18" viewBox="0 0 20 18"><rect x="1" y="1" width="18" height="15.800" rx="0.800" fill="none" stroke="#5c5c5c" stroke-width="1.500"/><rect x="5.400" y="4.400" width="9.200" height="9" fill="none" stroke="#5c5c5c" stroke-width="1.200"/><path d="M7.400 7H12.600M7.400 9H12.600M7.400 11H12.600" stroke="#5c5c5c" stroke-width="1"/></svg>
<svg style="left:1626.500px;top:1192px" width="20" height="18" viewBox="0 0 20 18"><rect x="1" y="1" width="18" height="15.800" rx="0.800" fill="none" stroke="#5c5c5c" stroke-width="1.500"/><path d="M1 9.600H19M7 1V9.600M12.400 1V9.600" stroke="#5c5c5c" stroke-width="1.400" fill="none"/></svg>
<div style="left:1671.8px;top:1199.9px;width:11.0px;height:1.7px;background:#4f4f4f;"></div>
<div style="left:1692.0px;top:1198.2px;width:135.0px;height:5.8px;background:#a6a6a6;border-radius:3px;"></div>
<div style="left:1757.8px;top:1199.4px;width:3.4px;height:3.4px;background:#dedede;border-radius:2px;"></div>
<div style="left:1732.8px;top:1189.9px;width:21.6px;height:21.6px;background:#fff;border-radius:11px;box-shadow:0 0.500px 1.500px rgba(0,0,0,0.35);"></div>
<svg style="left:1836px;top:1195px" width="12" height="12"><path d="M6 0.400V11.600M0.400 6H11.600" stroke="#4f4f4f" stroke-width="1.800"/></svg>
<div class="t" style="left:1875.2px;top:1194.0px;width:73.2px;height:18.6px;font-size:16.60px;color:#555;letter-spacing:0.000px;-webkit-text-stroke:0.250px #555;">75%</div>
</body>
</html>
